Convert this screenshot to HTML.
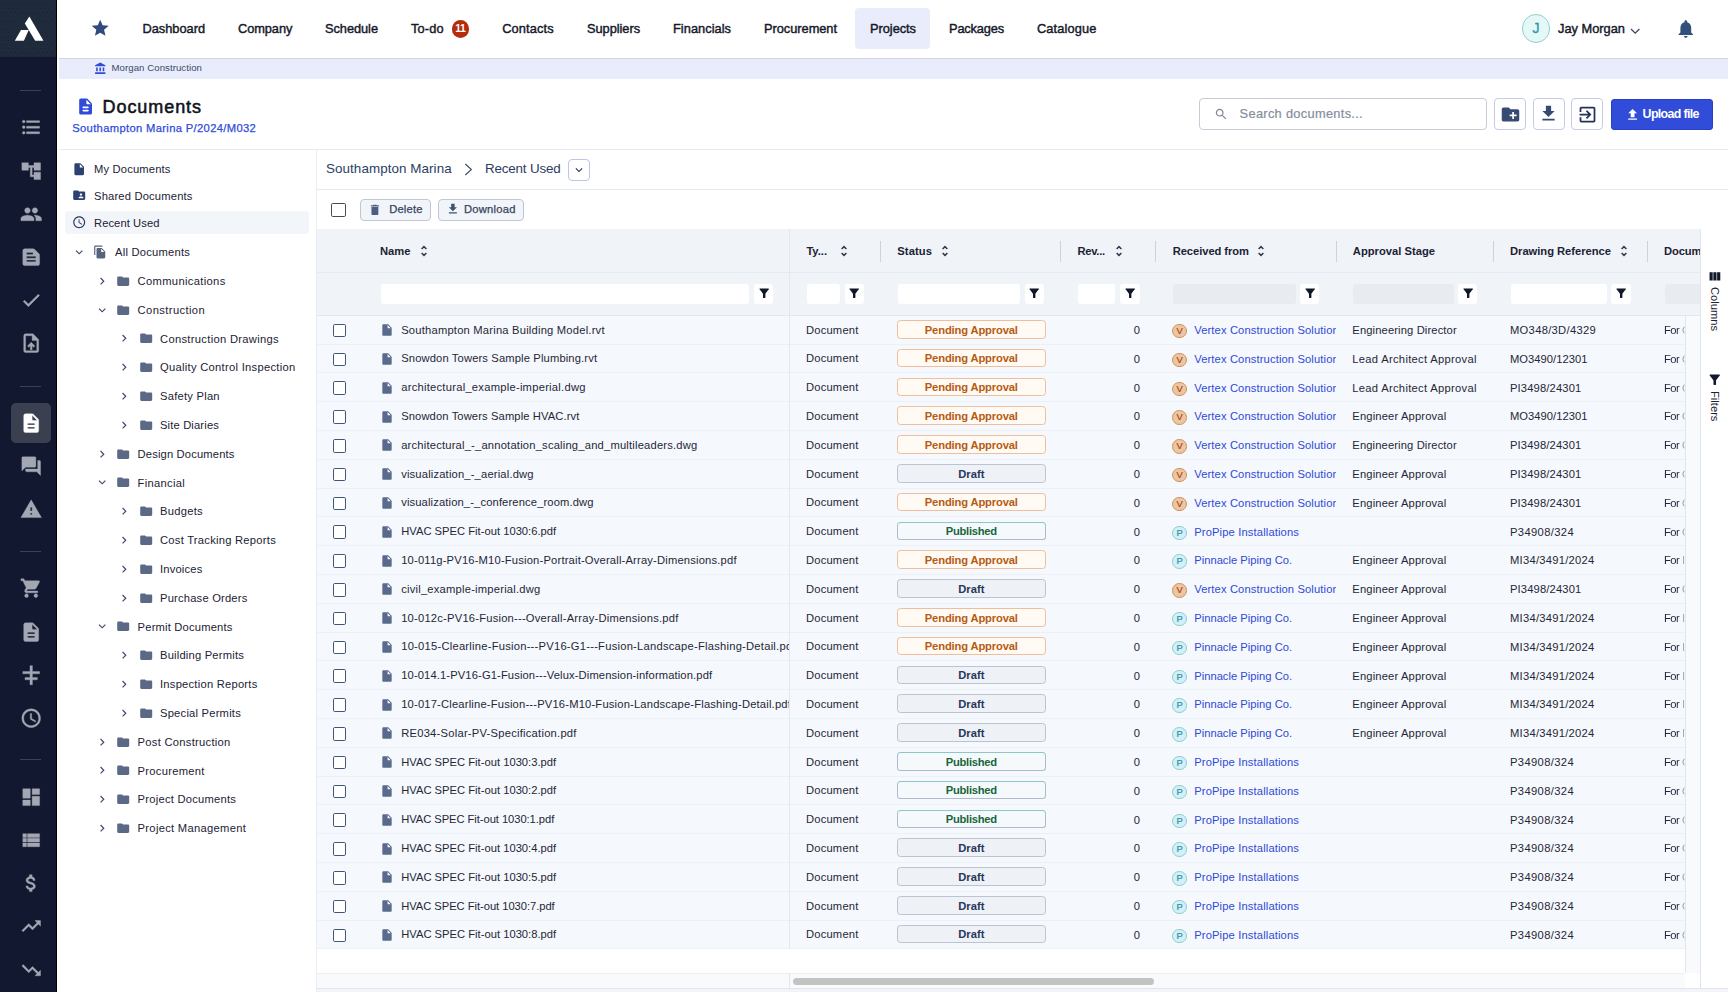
<!DOCTYPE html>
<html lang="en"><head><meta charset="utf-8"><title>Documents - Southampton Marina</title>
<style>
*,*::before,*::after{box-sizing:border-box}
html,body{margin:0;padding:0}
body{width:1728px;height:992px;overflow:hidden;background:#fff;position:relative;font-family:"Liberation Sans",sans-serif;color:#1b2234}
.sidebar,.topnav,.strip,.pagehead,.tree,.main,.grid,.sidepanel,.r{position:absolute;left:0;top:0;width:0;height:0;margin:0;padding:0}
.t{position:absolute;white-space:pre;margin:0;padding:0;text-decoration:none;display:block}
.ic{position:absolute;display:block;overflow:visible}
.med{-webkit-text-stroke:.42px}
.semi{-webkit-text-stroke:.55px}
div,span{position:absolute}
/* sidebar */
.sidebar::before{content:"";position:absolute;left:0;top:0;width:57px;height:992px;background:#121830;border-right:1.2px solid #000}
.logo{left:0;top:0;width:55.800px;height:57.400px;background-color:#1f2a3a}
.logo svg{position:absolute;left:0;top:0}
.sdiv{left:19.700px;width:21px;height:1px;background:#3a4158}
.sactive{left:10.900px;top:403.300px;width:40px;height:39.400px;border-radius:5px;background:#3a4050}
/* top nav */
.topnav::before{content:"";position:absolute;left:59px;top:0;width:1669px;height:58.500px;background:#fff;border-bottom:1px solid #d0d6e4}
.navsel{left:855px;top:8px;width:75px;height:41px;border-radius:4px;background:#e9edfb}
.badge{left:451.800px;top:20.200px;width:17.600px;height:17.600px;border-radius:50%;background:#b42c0d;color:#fff;font-size:10.400px;font-weight:700;text-align:center;line-height:17.800px;letter-spacing:-.5px;text-indent:-.5px}
.avatar{left:1521.900px;top:14.300px;width:28.400px;height:28.400px;border-radius:50%;border:1px solid #8fd0d4;background:#e4f8f8;color:#2e97a8;font-size:14px;-webkit-text-stroke:.3px;text-align:center;line-height:27px}
/* strip */
.strip::before{content:"";position:absolute;left:59px;top:58.500px;width:1669px;height:20px;background:#e9edfb}
/* page header */
.pagehead::after{content:"";position:absolute;left:59px;top:149.400px;width:1669px;height:1px;background:#e8ecf2}
.search{left:1199.200px;top:98.300px;width:287.600px;height:31.500px;border:1px solid #c6cbd5;border-radius:4px;background:#fff}
.ibtn{top:98.300px;width:31.800px;height:31.500px;border:1px solid #c3caea;border-radius:4px;background:#fff}
.upbtn{left:1610.700px;top:98.600px;width:102.700px;height:31.200px;border-radius:3px;background:#304cd9;border:1px solid #2841c6}
/* tree */
.tree::before{content:"";position:absolute;left:316px;top:150px;width:1px;height:842px;background:#eaedf3}
.tsel{left:64.800px;top:211.200px;width:244.200px;height:22.800px;border-radius:4px;background:#f2f5f9}
/* main */
.ddbtn{left:568px;top:159.300px;width:21.500px;height:21.300px;border:1px solid #bcc5ea;border-radius:4px;background:#fff}
.hline{left:317px;width:1411px;height:1px;background:#e6eaf1}
.cb{width:14.400px;height:14.400px;border:1.400px solid #42557c;border-radius:1.800px;background:#fff}
.cb{border-color:#4a4b50}
.cb.sm{width:13.600px;height:13.600px;border-color:#42557c}
.tbtn{top:199px;height:21.800px;border:1px solid #bfc7d4;background:#f1f4f8;border-radius:4px}
.ghead{left:317px;top:229px;width:1383px;height:44px;background:#f0f3f8;border-bottom:1px solid #e6e9f1}
.gfilt{left:317px;top:273px;width:1383px;height:43px;background:#f0f3f8;border-bottom:1px solid #e3e6f3}
.hsep{top:241px;height:20.600px;width:1px;background:#cdd2dc}
.fin{top:283.600px;height:20.200px;background:#fff;border-radius:3px}
.fin.dis{background:#e8ebf0}
.fbtn{top:283.800px;width:19.600px;height:19.800px;background:#fff;border-radius:3px;margin-left:-.5px}
.row{left:317px;width:1368px;height:28.800px;background:#f5f8fc;border-bottom:1px solid #edf0f6}
.clipr{overflow:hidden}
.fade{-webkit-mask-image:linear-gradient(90deg,#000 70%,transparent 100%);mask-image:linear-gradient(90deg,#000 70%,transparent 100%)}
.bdg{left:896.900px;width:148.800px;height:18.500px;border:1px solid;border-radius:3.500px}
.pend{background:#fffaf3;border-color:#eebf9c}
.draft{background:#eef1f6;border-color:#bcc4d2}
.publ{background:#f6f9fc;border-color:#adbccd;border-top-color:#8ac8c5}
.av{left:1172.300px;width:14.500px;height:14.500px;border-radius:50%;border:1px solid;font-size:9.400px;font-weight:400;-webkit-text-stroke:.2px;text-align:center;line-height:12.700px}
.av.v{background:#ebc6a3;border-color:#cf935f;color:#b3400c}
.av.p{background:#d3f0f6;border-color:#8fcdd2;color:#2b8fa9}
.pinline{left:789px;top:229px;width:1px;height:720px;background:#e3e7ef}
.pinline2{left:789px;top:973px;width:1px;height:15px;background:#e0e5ee}
.vscroll{left:1685px;top:315.500px;width:15px;height:657.500px;background:#f8fafb;border-left:1px solid #e2e6ee}
.hscroll{left:790px;top:973px;width:895px;height:15px;background:#f8fafb;border-top:1px solid #eceff4}
.hthumb{left:3.200px;top:3.800px;width:360.400px;height:7.600px;background:#c3c3c3;border-radius:4px}
.hscroll-l{left:317px;top:973px;width:472.500px;height:15px;background:#f8fafb;border-top:1px solid #eceff4}
.sidepanel::before{content:"";position:absolute;left:1700px;top:229px;width:28px;height:759px;background:#fff;border-left:1px solid #e0e4f2}
.main::after{content:"";position:absolute;left:317px;top:988px;width:1411px;height:4px;background:#f2f4f9;border-top:1px solid #e0e4ef}
.vt{writing-mode:vertical-rl;font-size:11.200px;width:14px;line-height:14px;color:#1b2234;white-space:pre}

</style></head>
<body>
<aside class="sidebar">
<div class="logo"><svg viewBox="0 0 57 57.500" width="57" height="57.500"><defs><pattern id="dots" width="4" height="8" patternUnits="userSpaceOnUse"><rect x="3" y="4" width="1" height="1" fill="#0f1b52"/><rect x="0" y="0" width="1" height="1" fill="#0f1b52"/></pattern><radialGradient id="dm" cx="29" cy="30" r="30" gradientUnits="userSpaceOnUse"><stop offset=".35" stop-color="#000"/><stop offset=".95" stop-color="#fff"/></radialGradient><mask id="dmask"><rect width="57" height="58" fill="url(#dm)"/></mask></defs><rect x="2" y="3" width="50" height="55" fill="url(#dots)" mask="url(#dmask)"/><path fill="#fff" d="M24.800 23.500 L29.350 16.600 L43.500 40.800 L35.200 40.800 Z"/><path fill="#fff" d="M21 29.900 L28.700 29.900 L23.900 40.800 L14.800 40.800 Z"/></svg></div>
<div class="sdiv" style="top:90.4px"></div>
<div class="sdiv" style="top:385.7px"></div>
<div class="sdiv" style="top:550.7px"></div>
<div class="sdiv" style="top:759.4px"></div>
<div class="sactive"></div>
<svg class="ic" style="left:19.70px;top:116.40px;width:22.4px;height:22.4px;" viewBox="0 0 24 24"><path fill="#a3a7b3" stroke="#a3a7b3" stroke-width="0.4" stroke-linejoin="round" d="M4 10.5c-.83 0-1.5.67-1.5 1.5s.67 1.5 1.5 1.5 1.5-.67 1.5-1.5-.67-1.5-1.5-1.5zm0-6c-.83 0-1.5.67-1.5 1.5S3.17 7.5 4 7.5 5.5 6.83 5.5 6 4.83 4.500 4 4.500zm0 12c-.83 0-1.5.68-1.5 1.5s.68 1.5 1.5 1.5 1.5-.68 1.5-1.5-.67-1.5-1.5-1.5zM7 19h14v-2H7v2zm0-6h14v-2H7v2zm0-8v2h14V5H7z"/></svg>
<svg class="ic" style="left:19.70px;top:159.60px;width:22.4px;height:22.4px;" viewBox="0 0 24 24"><path fill="#a3a7b3" stroke="#a3a7b3" stroke-width="0.4" stroke-linejoin="round" d="M22 11V3h-7v3H9V3H2v8h7V8h2v10h4v3h7v-8h-7v3h-2V8h2v3z"/></svg>
<svg class="ic" style="left:19.70px;top:202.80px;width:22.4px;height:22.4px;" viewBox="0 0 24 24"><path fill="#a3a7b3" stroke="#a3a7b3" stroke-width="0.4" stroke-linejoin="round" d="M16 11c1.66 0 2.99-1.34 2.99-3S17.66 5 16 5c-1.66 0-3 1.34-3 3s1.34 3 3 3zm-8 0c1.66 0 2.990-1.340 2.990-3S9.660 5 8 5C6.340 5 5 6.340 5 8s1.340 3 3 3zm0 2c-2.330 0-7 1.170-7 3.500V19h14v-2.500c0-2.330-4.670-3.500-7-3.500zm8 0c-.290 0-.620.020-.970.050 1.160.840 1.970 1.970 1.970 3.450V19h6v-2.500c0-2.330-4.670-3.500-7-3.500z"/></svg>
<svg class="ic" style="left:19.70px;top:246.00px;width:22.4px;height:22.4px;" viewBox="0 0 24 24"><path fill="#a3a7b3" stroke="#a3a7b3" stroke-width="0.4" stroke-linejoin="round" d="M20.410 8.410l-4.830-4.830c-.370-.370-.880-.580-1.410-.580H5c-1.100 0-2 .9-2 2v14c0 1.100.9 2 2 2h14c1.100 0 2-.9 2-2V9.830c0-.530-.210-1.040-.590-1.420zM7 7h7v2H7V7zm10 10H7v-2h10v2zm0-4H7v-2h10v2z"/></svg>
<svg class="ic" style="left:19.70px;top:289.20px;width:22.4px;height:22.4px;" viewBox="0 0 24 24"><path fill="#a3a7b3" stroke="#a3a7b3" stroke-width="0.4" stroke-linejoin="round" d="M9 16.170L4.830 12l-1.420 1.410L9 19 21 7l-1.410-1.410z"/></svg>
<svg class="ic" style="left:19.70px;top:332.40px;width:22.4px;height:22.4px;" viewBox="0 0 24 24"><path fill="#a3a7b3" stroke="#a3a7b3" stroke-width="0.4" stroke-linejoin="round" d="M14 2H6c-1.100 0-1.990.9-1.990 2L4 20c0 1.100.890 2 1.990 2H18c1.100 0 2-.9 2-2V8l-6-6zm4 18H6V4h7v5h5v11zM8 15.010l1.410 1.410L11 14.840V19h2v-4.160l1.590 1.590L16 15.010 12.010 11z"/></svg>
<svg class="ic" style="left:19.70px;top:411.90px;width:22.4px;height:22.4px;" viewBox="0 0 24 24"><path fill="#ffffff" stroke="#ffffff" stroke-width="0.4" stroke-linejoin="round" d="M14.590 2.590c-.380-.380-.890-.590-1.420-.590H6c-1.100 0-2 .9-2 2v16c0 1.100.890 2 1.990 2H18c1.100 0 2-.9 2-2V8.830c0-.530-.210-1.040-.590-1.410l-4.820-4.830zM15 18H9c-.550 0-1-.450-1-1s.450-1 1-1h6c.550 0 1 .450 1 1s-.450 1-1 1zm0-4H9c-.550 0-1-.450-1-1s.450-1 1-1h6c.550 0 1 .450 1 1s-.450 1-1 1zm-2-6V3.500L18.500 9H14c-.550 0-1-.450-1-1z"/></svg>
<svg class="ic" style="left:19.70px;top:455.20px;width:22.4px;height:22.4px;" viewBox="0 0 24 24"><path fill="#a3a7b3" stroke="#a3a7b3" stroke-width="0.4" stroke-linejoin="round" d="M21 6h-2v9H6v2c0 .55.45 1 1 1h11l4 4V7c0-.55-.45-1-1-1zm-4 6V3c0-.55-.45-1-1-1H3c-.55 0-1 .45-1 1v14l4-4h10c.55 0 1-.45 1-1z"/></svg>
<svg class="ic" style="left:19.70px;top:498.40px;width:22.4px;height:22.4px;" viewBox="0 0 24 24"><path fill="#a3a7b3" stroke="#a3a7b3" stroke-width="0.4" stroke-linejoin="round" d="M1 21h22L12 2 1 21zm12-3h-2v-2h2v2zm0-4h-2v-4h2v4z"/></svg>
<svg class="ic" style="left:19.70px;top:577.30px;width:22.4px;height:22.4px;" viewBox="0 0 24 24"><path fill="#a3a7b3" stroke="#a3a7b3" stroke-width="0.4" stroke-linejoin="round" d="M7 18c-1.100 0-1.990.9-1.990 2S5.900 22 7 22s2-.9 2-2-.9-2-2-2zM1 2v2h2l3.600 7.590-1.350 2.450c-.160.280-.250.610-.250.960 0 1.100.9 2 2 2h12v-2H7.420c-.140 0-.250-.110-.250-.250l.030-.120.9-1.630h7.450c.750 0 1.410-.410 1.750-1.030l3.580-6.490c.080-.140.120-.310.120-.480 0-.550-.450-1-1-1H5.210l-.940-2H1zm16 16c-1.100 0-1.990.9-1.990 2s.890 2 1.990 2 2-.9 2-2-.9-2-2-2z"/></svg>
<svg class="ic" style="left:19.70px;top:620.50px;width:22.4px;height:22.4px;" viewBox="0 0 24 24"><path fill="#a3a7b3" stroke="#a3a7b3" stroke-width="0.4" stroke-linejoin="round" d="M14.590 2.590c-.380-.380-.890-.590-1.420-.590H6c-1.100 0-2 .9-2 2v16c0 1.100.890 2 1.990 2H18c1.100 0 2-.9 2-2V8.830c0-.530-.210-1.040-.590-1.410l-4.820-4.830zM15 18H9c-.550 0-1-.450-1-1s.450-1 1-1h6c.550 0 1 .450 1 1s-.450 1-1 1zm0-4H9c-.550 0-1-.450-1-1s.450-1 1-1h6c.550 0 1 .450 1 1s-.450 1-1 1zm-2-6V3.500L18.500 9H14c-.550 0-1-.450-1-1z"/></svg>
<svg class="ic" style="left:19.70px;top:663.70px;width:22.4px;height:22.4px;" viewBox="0 0 24 24"><path fill="#a3a7b3" stroke="#a3a7b3" stroke-width="0.4" stroke-linejoin="round" d="M10.700 1.800h2.600V8H21v2.500h-7.700v3.900h5.300v2.500h-5.300v5.300h-2.600v-5.300H5.400v-2.500h5.300v-3.900H3V8h7.700z"/></svg>
<svg class="ic" style="left:19.70px;top:706.90px;width:22.4px;height:22.4px;" viewBox="0 0 24 24"><path fill="#a3a7b3" stroke="#a3a7b3" stroke-width="0.4" stroke-linejoin="round" d="M11.990 2C6.470 2 2 6.480 2 12s4.470 10 9.990 10C17.520 22 22 17.520 22 12S17.520 2 11.990 2zM12 20c-4.420 0-8-3.580-8-8s3.580-8 8-8 8 3.580 8 8-3.580 8-8 8zm.5-13H11v6l5.250 3.150.750-1.230-4.500-2.670z"/></svg>
<svg class="ic" style="left:19.70px;top:785.70px;width:22.4px;height:22.4px;" viewBox="0 0 24 24"><path fill="#a3a7b3" stroke="#a3a7b3" stroke-width="0.4" stroke-linejoin="round" d="M3 13h8V3H3v10zm0 8h8v-6H3v6zm10 0h8V11h-8v10zm0-18v6h8V3h-8z"/></svg>
<svg class="ic" style="left:19.70px;top:828.90px;width:22.4px;height:22.4px;" viewBox="0 0 24 24"><path fill="#a3a7b3" stroke="#a3a7b3" stroke-width="0.4" stroke-linejoin="round" d="M3 14h4v-4H3v4zm0 5h4v-4H3v4zM3 9h4V5H3v4zm5 5h13v-4H8v4zm0 5h13v-4H8v4zM8 5v4h13V5H8z"/></svg>
<svg class="ic" style="left:19.70px;top:872.10px;width:22.4px;height:22.4px;" viewBox="0 0 24 24"><path fill="#a3a7b3" stroke="#a3a7b3" stroke-width="0.4" stroke-linejoin="round" d="M11.800 10.900c-2.270-.590-3-1.200-3-2.150 0-1.090 1.010-1.850 2.700-1.850 1.780 0 2.440.850 2.500 2.100h2.210c-.070-1.720-1.120-3.300-3.210-3.810V3h-3v2.160c-1.940.420-3.500 1.680-3.500 3.610 0 2.310 1.910 3.460 4.700 4.130 2.500.6 3 1.480 3 2.410 0 .690-.490 1.790-2.700 1.790-2.060 0-2.870-.920-2.980-2.100h-2.200c.120 2.190 1.760 3.420 3.680 3.830V21h3v-2.150c1.950-.370 3.500-1.500 3.500-3.550 0-2.840-2.430-3.810-4.700-4.400z"/></svg>
<svg class="ic" style="left:19.70px;top:915.30px;width:22.4px;height:22.4px;" viewBox="0 0 24 24"><path fill="#a3a7b3" stroke="#a3a7b3" stroke-width="0.4" stroke-linejoin="round" d="M16 6l2.290 2.290-4.880 4.880-4-4L2 16.590 3.410 18l6-6 4 4 6.300-6.290L22 12V6z"/></svg>
<svg class="ic" style="left:19.70px;top:958.50px;width:22.4px;height:22.4px;" viewBox="0 0 24 24"><path fill="#a3a7b3" stroke="#a3a7b3" stroke-width="0.4" stroke-linejoin="round" d="M16 18l2.290-2.290-4.880-4.880-4 4L2 7.410 3.410 6l6 6 4-4 6.300 6.290L22 12v6z"/></svg>
</aside>
<header class="topnav">
<svg class="ic" style="left:89.60px;top:18.40px;width:20.4px;height:20.4px;" viewBox="0 0 24 24"><path fill="#2f4a7c" d="M12 17.270L18.180 21l-1.640-7.030L22 9.240l-7.190-.610L12 2 9.190 8.630 2 9.240l5.460 4.730L5.820 21z"/></svg>
<div class="navsel"></div>
<a class="t med" style="left:142.50px;top:20.25px;font-size:12.8px;line-height:17.9px;font-weight:400;color:#15182a;letter-spacing:-0.012px;">Dashboard</a>
<a class="t med" style="left:238.00px;top:20.25px;font-size:12.8px;line-height:17.9px;font-weight:400;color:#15182a;letter-spacing:-0.069px;">Company</a>
<a class="t med" style="left:325.00px;top:20.25px;font-size:12.8px;line-height:17.9px;font-weight:400;color:#15182a;letter-spacing:-0.047px;">Schedule</a>
<a class="t med" style="left:411.00px;top:20.25px;font-size:12.8px;line-height:17.9px;font-weight:400;color:#15182a;letter-spacing:0.157px;">To-do</a>
<a class="t med" style="left:502.20px;top:20.25px;font-size:12.8px;line-height:17.9px;font-weight:400;color:#15182a;letter-spacing:0.136px;">Contacts</a>
<a class="t med" style="left:587.00px;top:20.25px;font-size:12.8px;line-height:17.9px;font-weight:400;color:#15182a;letter-spacing:-0.040px;">Suppliers</a>
<a class="t med" style="left:673.00px;top:20.25px;font-size:12.8px;line-height:17.9px;font-weight:400;color:#15182a;letter-spacing:0.037px;">Financials</a>
<a class="t med" style="left:764.00px;top:20.25px;font-size:12.8px;line-height:17.9px;font-weight:400;color:#15182a;letter-spacing:-0.024px;">Procurement</a>
<a class="t med" style="left:870.00px;top:20.25px;font-size:12.8px;line-height:17.9px;font-weight:400;color:#15182a;letter-spacing:-0.029px;">Projects</a>
<a class="t med" style="left:949.00px;top:20.25px;font-size:12.8px;line-height:17.9px;font-weight:400;color:#15182a;letter-spacing:-0.150px;">Packages</a>
<a class="t med" style="left:1037.00px;top:20.25px;font-size:12.8px;line-height:17.9px;font-weight:400;color:#15182a;letter-spacing:0.128px;">Catalogue</a>
<span class="badge">11</span>
<span class="avatar">J</span>
<span class="t med" style="left:1558.00px;top:20.15px;font-size:12.8px;line-height:17.9px;font-weight:400;color:#15182a;letter-spacing:0.014px;">Jay Morgan</span>
<svg class="ic" style="left:1629.6px;top:28.4px;width:10.4px;height:7px" viewBox="0 0 10.400 7"><path d="M1 1 L5.200 5.200 L9.400 1" fill="none" stroke="#3a4560" stroke-width="1.300"/></svg>
<svg class="ic" style="left:1675.00px;top:18.20px;width:21.6px;height:21.6px;" viewBox="0 0 24 24"><path fill="#33507c" d="M12 22c1.100 0 2-.9 2-2h-4c0 1.100.890 2 2 2zm6-6v-5c0-3.070-1.640-5.640-4.500-6.320V4c0-.830-.670-1.500-1.500-1.500s-1.500.670-1.500 1.500v.680C7.630 5.360 6 7.920 6 11v5l-2 2v1h16v-1l-2-2z"/></svg>
</header>
<div class="strip">
<svg class="ic" style="left:94.40px;top:61.60px;width:13px;height:13px;" viewBox="0 0 24 24"><path fill="#2f4bd8" d="M4 10v7h3v-7H4zm6 0v7h3v-7h-3zM2 22h19v-3H2v3zm14-12v7h3v-7h-3zm-4.500-9L2 6v2h19V6l-9.500-5z"/></svg>
<span class="t" style="left:111.50px;top:61.30px;font-size:9.6px;line-height:13.4px;font-weight:400;color:#3a4a6b;letter-spacing:0.076px;">Morgan Construction</span>
</div>
<section class="pagehead">
<svg class="ic" style="left:75.70px;top:97.20px;width:19.2px;height:19.2px;" viewBox="0 0 24 24"><path fill="#2f4bd8" d="M14.590 2.590c-.380-.380-.890-.590-1.420-.590H6c-1.100 0-2 .9-2 2v16c0 1.100.890 2 1.990 2H18c1.100 0 2-.9 2-2V8.830c0-.530-.210-1.040-.590-1.410l-4.820-4.830zM15 18H9c-.550 0-1-.450-1-1s.450-1 1-1h6c.550 0 1 .450 1 1s-.450 1-1 1zm0-4H9c-.550 0-1-.450-1-1s.450-1 1-1h6c.550 0 1 .450 1 1s-.450 1-1 1zm-2-6V3.500L18.500 9H14c-.550 0-1-.450-1-1z"/></svg>
<h1 class="t semi" style="left:102.50px;top:95.40px;font-size:18px;line-height:25.2px;font-weight:400;color:#10131c;letter-spacing:0.939px;">Documents</h1>
<span class="t" style="left:72.20px;top:121.15px;font-size:11.2px;line-height:15.7px;font-weight:400;color:#2f4bd8;letter-spacing:0.349px;-webkit-text-stroke:.25px;">Southampton Marina P/2024/M032</span>
<div class="search"></div>
<svg class="ic" style="left:1214.00px;top:107.00px;width:14.4px;height:14.4px;" viewBox="0 0 24 24"><path fill="#7d8493" d="M15.500 14h-.790l-.280-.270C15.410 12.590 16 11.110 16 9.500 16 5.910 13.090 3 9.500 3S3 5.910 3 9.500 5.910 16 9.500 16c1.610 0 3.090-.590 4.230-1.570l.270.280v.790l5 4.990L20.490 19l-4.990-5zm-6 0C7.010 14 5 11.990 5 9.500S7.010 5 9.500 5 14 7.010 14 9.500 11.990 14 9.500 14z"/></svg>
<span class="t" style="left:1239.60px;top:104.65px;font-size:12.8px;line-height:17.9px;font-weight:400;color:#858d9d;letter-spacing:0.317px;-webkit-text-stroke:.2px;">Search documents...</span>
<div class="ibtn" style="left:1494.1px"></div>
<svg class="ic" style="left:1499.50px;top:103.60px;width:21px;height:21px;" viewBox="0 0 24 24"><path fill="#364a73" d="M20 6h-8l-2-2H4c-1.110 0-1.990.890-1.990 2L2 18c0 1.110.890 2 2 2h16c1.110 0 2-.890 2-2V8c0-1.110-.890-2-2-2zm-1 8h-3v3h-2v-3h-3v-2h3V9h2v3h3v2z"/></svg>
<div class="ibtn" style="left:1533px"></div>
<svg class="ic" style="left:1538.40px;top:103.10px;width:21px;height:21px;" viewBox="0 0 24 24"><path fill="#364a73" d="M19 9h-4V3H9v6H5l7 7 7-7zM5 18v2h14v-2H5z"/></svg>
<div class="ibtn" style="left:1571.1px"></div>
<svg class="ic" style="left:1576.50px;top:103.60px;width:21px;height:21px;" viewBox="0 0 24 24"><path fill="#22325a" d="M10.090 15.590L11.500 17l5-5-5-5-1.410 1.410L12.670 11H3v2h9.670l-2.580 2.590zM19 3H5c-1.110 0-2 .9-2 2v4h2V5h14v14H5v-4H3v4c0 1.100.890 2 2 2h14c1.100 0 2-.9 2-2V5c0-1.100-.9-2-2-2z"/></svg>
<div class="upbtn"></div>
<svg class="ic" style="left:1624.60px;top:106.60px;width:15.2px;height:15.2px;" viewBox="0 0 24 24"><path fill="#ffffff" d="M9 16h6v-6h4l-7-7-7 7h4zm-4 2h14v2H5z"/></svg>
<span class="t" style="left:1642.60px;top:105.80px;font-size:12.4px;line-height:17.4px;font-weight:700;color:#ffffff;letter-spacing:-0.649px;">Upload file</span>
</section>
<nav class="tree">
<div class="tsel"></div>
<svg class="ic" style="left:72.00px;top:161.50px;width:14.4px;height:14.4px;" viewBox="0 0 24 24"><path fill="#2b4170" d="M6 2c-1.100 0-1.990.9-1.990 2L4 20c0 1.100.890 2 1.990 2H18c1.100 0 2-.9 2-2V8l-6-6H6zm7 7V3.500L18.500 9H13z"/></svg>
<span class="t" style="left:94.00px;top:161.75px;font-size:11.2px;line-height:15.7px;font-weight:400;color:#1b2234;letter-spacing:0.166px;">My Documents</span>
<svg class="ic" style="left:72.00px;top:188.30px;width:14.4px;height:14.4px;" viewBox="0 0 24 24"><path fill="#2b4170" d="M20 6h-8l-2-2H4c-1.100 0-1.990.9-1.990 2L2 18c0 1.100.9 2 2 2h16c1.100 0 2-.9 2-2V8c0-1.100-.9-2-2-2zm-5 3c1.100 0 2 .9 2 2s-.9 2-2 2-2-.9-2-2 .9-2 2-2zm4 8h-8v-1c0-1.330 2.670-2 4-2s4 .670 4 2v1z"/></svg>
<span class="t" style="left:94.00px;top:188.65px;font-size:11.2px;line-height:15.7px;font-weight:400;color:#1b2234;letter-spacing:0.176px;">Shared Documents</span>
<svg class="ic" style="left:72.00px;top:215.40px;width:14.4px;height:14.4px;" viewBox="0 0 24 24"><path fill="#2b3a5e" d="M11.990 2C6.470 2 2 6.480 2 12s4.470 10 9.990 10C17.520 22 22 17.520 22 12S17.520 2 11.990 2zM12 20c-4.420 0-8-3.580-8-8s3.580-8 8-8 8 3.580 8 8-3.580 8-8 8zm.5-13H11v6l5.250 3.150.750-1.230-4.500-2.670z"/></svg>
<span class="t" style="left:94.00px;top:215.65px;font-size:11.2px;line-height:15.7px;font-weight:400;color:#1b2234;letter-spacing:0.074px;">Recent Used</span>
<svg class="ic" style="left:72.00px;top:245.10px;width:14.4px;height:14.4px;" viewBox="0 0 24 24"><path fill="#3d4a6b" d="M16.590 8.590L12 13.170 7.410 8.590 6 10l6 6 6-6z"/></svg>
<svg class="ic" style="left:93.30px;top:245.30px;width:14px;height:14px;" viewBox="0 0 24 24"><path fill="#56637f" d="M16 1H4c-1.100 0-2 .9-2 2v14h2V3h12V1zm-1 4l6 6v10c0 1.100-.9 2-2 2H7.990C6.890 23 6 22.100 6 21l.010-14c0-1.100.890-2 1.990-2h7zm-1 7h5.500L14 6.500V12z"/></svg>
<span class="t" style="left:115.10px;top:245.45px;font-size:11.2px;line-height:15.7px;font-weight:400;color:#1b2234;letter-spacing:0.221px;">All Documents</span>
<svg class="ic" style="left:94.50px;top:273.70px;width:14.4px;height:14.4px;" viewBox="0 0 24 24"><path fill="#3d4a6b" d="M10 6L8.590 7.410 13.170 12l-4.580 4.590L10 18l6-6z"/></svg>
<svg class="ic" style="left:116.20px;top:273.70px;width:14.4px;height:14.4px;" viewBox="0 0 24 24"><path fill="#5b6886" d="M10 4H4c-1.100 0-1.990.9-1.990 2L2 18c0 1.100.9 2 2 2h16c1.100 0 2-.9 2-2V8c0-1.100-.9-2-2-2h-8l-2-2z"/></svg>
<span class="t" style="left:137.60px;top:274.05px;font-size:11.2px;line-height:15.7px;font-weight:400;color:#1b2234;letter-spacing:0.334px;">Communications</span>
<svg class="ic" style="left:94.50px;top:302.50px;width:14.4px;height:14.4px;" viewBox="0 0 24 24"><path fill="#3d4a6b" d="M16.590 8.590L12 13.170 7.410 8.590 6 10l6 6 6-6z"/></svg>
<svg class="ic" style="left:116.20px;top:302.50px;width:14.4px;height:14.4px;" viewBox="0 0 24 24"><path fill="#5b6886" d="M10 4H4c-1.100 0-1.990.9-1.990 2L2 18c0 1.100.9 2 2 2h16c1.100 0 2-.9 2-2V8c0-1.100-.9-2-2-2h-8l-2-2z"/></svg>
<span class="t" style="left:137.60px;top:302.85px;font-size:11.2px;line-height:15.7px;font-weight:400;color:#1b2234;letter-spacing:0.391px;">Construction</span>
<svg class="ic" style="left:116.90px;top:331.30px;width:14.4px;height:14.4px;" viewBox="0 0 24 24"><path fill="#3d4a6b" d="M10 6L8.590 7.410 13.170 12l-4.580 4.590L10 18l6-6z"/></svg>
<svg class="ic" style="left:138.60px;top:331.30px;width:14.4px;height:14.4px;" viewBox="0 0 24 24"><path fill="#5b6886" d="M10 4H4c-1.100 0-1.990.9-1.990 2L2 18c0 1.100.9 2 2 2h16c1.100 0 2-.9 2-2V8c0-1.100-.9-2-2-2h-8l-2-2z"/></svg>
<span class="t" style="left:160.00px;top:331.65px;font-size:11.2px;line-height:15.7px;font-weight:400;color:#1b2234;letter-spacing:0.307px;">Construction Drawings</span>
<svg class="ic" style="left:116.90px;top:360.10px;width:14.4px;height:14.4px;" viewBox="0 0 24 24"><path fill="#3d4a6b" d="M10 6L8.590 7.410 13.170 12l-4.580 4.590L10 18l6-6z"/></svg>
<svg class="ic" style="left:138.60px;top:360.10px;width:14.4px;height:14.4px;" viewBox="0 0 24 24"><path fill="#5b6886" d="M10 4H4c-1.100 0-1.990.9-1.990 2L2 18c0 1.100.9 2 2 2h16c1.100 0 2-.9 2-2V8c0-1.100-.9-2-2-2h-8l-2-2z"/></svg>
<span class="t" style="left:160.00px;top:360.45px;font-size:11.2px;line-height:15.7px;font-weight:400;color:#1b2234;letter-spacing:0.284px;">Quality Control Inspection</span>
<svg class="ic" style="left:116.90px;top:388.90px;width:14.4px;height:14.4px;" viewBox="0 0 24 24"><path fill="#3d4a6b" d="M10 6L8.590 7.410 13.170 12l-4.580 4.590L10 18l6-6z"/></svg>
<svg class="ic" style="left:138.60px;top:388.90px;width:14.4px;height:14.4px;" viewBox="0 0 24 24"><path fill="#5b6886" d="M10 4H4c-1.100 0-1.990.9-1.990 2L2 18c0 1.100.9 2 2 2h16c1.100 0 2-.9 2-2V8c0-1.100-.9-2-2-2h-8l-2-2z"/></svg>
<span class="t" style="left:160.00px;top:389.25px;font-size:11.2px;line-height:15.7px;font-weight:400;color:#1b2234;letter-spacing:0.235px;">Safety Plan</span>
<svg class="ic" style="left:116.90px;top:417.70px;width:14.4px;height:14.4px;" viewBox="0 0 24 24"><path fill="#3d4a6b" d="M10 6L8.590 7.410 13.170 12l-4.580 4.590L10 18l6-6z"/></svg>
<svg class="ic" style="left:138.60px;top:417.70px;width:14.4px;height:14.4px;" viewBox="0 0 24 24"><path fill="#5b6886" d="M10 4H4c-1.100 0-1.990.9-1.990 2L2 18c0 1.100.9 2 2 2h16c1.100 0 2-.9 2-2V8c0-1.100-.9-2-2-2h-8l-2-2z"/></svg>
<span class="t" style="left:160.00px;top:418.05px;font-size:11.2px;line-height:15.7px;font-weight:400;color:#1b2234;letter-spacing:0.150px;">Site Diaries</span>
<svg class="ic" style="left:94.50px;top:446.50px;width:14.4px;height:14.4px;" viewBox="0 0 24 24"><path fill="#3d4a6b" d="M10 6L8.590 7.410 13.170 12l-4.580 4.590L10 18l6-6z"/></svg>
<svg class="ic" style="left:116.20px;top:446.50px;width:14.4px;height:14.4px;" viewBox="0 0 24 24"><path fill="#5b6886" d="M10 4H4c-1.100 0-1.990.9-1.990 2L2 18c0 1.100.9 2 2 2h16c1.100 0 2-.9 2-2V8c0-1.100-.9-2-2-2h-8l-2-2z"/></svg>
<span class="t" style="left:137.60px;top:446.85px;font-size:11.2px;line-height:15.7px;font-weight:400;color:#1b2234;letter-spacing:0.155px;">Design Documents</span>
<svg class="ic" style="left:94.50px;top:475.30px;width:14.4px;height:14.4px;" viewBox="0 0 24 24"><path fill="#3d4a6b" d="M16.590 8.590L12 13.170 7.410 8.590 6 10l6 6 6-6z"/></svg>
<svg class="ic" style="left:116.20px;top:475.30px;width:14.4px;height:14.4px;" viewBox="0 0 24 24"><path fill="#5b6886" d="M10 4H4c-1.100 0-1.990.9-1.990 2L2 18c0 1.100.9 2 2 2h16c1.100 0 2-.9 2-2V8c0-1.100-.9-2-2-2h-8l-2-2z"/></svg>
<span class="t" style="left:137.60px;top:475.65px;font-size:11.2px;line-height:15.7px;font-weight:400;color:#1b2234;letter-spacing:0.302px;">Financial</span>
<svg class="ic" style="left:116.90px;top:504.10px;width:14.4px;height:14.4px;" viewBox="0 0 24 24"><path fill="#3d4a6b" d="M10 6L8.590 7.410 13.170 12l-4.580 4.590L10 18l6-6z"/></svg>
<svg class="ic" style="left:138.60px;top:504.10px;width:14.4px;height:14.4px;" viewBox="0 0 24 24"><path fill="#5b6886" d="M10 4H4c-1.100 0-1.990.9-1.990 2L2 18c0 1.100.9 2 2 2h16c1.100 0 2-.9 2-2V8c0-1.100-.9-2-2-2h-8l-2-2z"/></svg>
<span class="t" style="left:160.00px;top:504.45px;font-size:11.2px;line-height:15.7px;font-weight:400;color:#1b2234;letter-spacing:0.277px;">Budgets</span>
<svg class="ic" style="left:116.90px;top:532.90px;width:14.4px;height:14.4px;" viewBox="0 0 24 24"><path fill="#3d4a6b" d="M10 6L8.590 7.410 13.170 12l-4.580 4.590L10 18l6-6z"/></svg>
<svg class="ic" style="left:138.60px;top:532.90px;width:14.4px;height:14.4px;" viewBox="0 0 24 24"><path fill="#5b6886" d="M10 4H4c-1.100 0-1.990.9-1.990 2L2 18c0 1.100.9 2 2 2h16c1.100 0 2-.9 2-2V8c0-1.100-.9-2-2-2h-8l-2-2z"/></svg>
<span class="t" style="left:160.00px;top:533.25px;font-size:11.2px;line-height:15.7px;font-weight:400;color:#1b2234;letter-spacing:0.253px;">Cost Tracking Reports</span>
<svg class="ic" style="left:116.90px;top:561.70px;width:14.4px;height:14.4px;" viewBox="0 0 24 24"><path fill="#3d4a6b" d="M10 6L8.590 7.410 13.170 12l-4.580 4.590L10 18l6-6z"/></svg>
<svg class="ic" style="left:138.60px;top:561.70px;width:14.4px;height:14.4px;" viewBox="0 0 24 24"><path fill="#5b6886" d="M10 4H4c-1.100 0-1.990.9-1.990 2L2 18c0 1.100.9 2 2 2h16c1.100 0 2-.9 2-2V8c0-1.100-.9-2-2-2h-8l-2-2z"/></svg>
<span class="t" style="left:160.00px;top:562.05px;font-size:11.2px;line-height:15.7px;font-weight:400;color:#1b2234;letter-spacing:0.182px;">Invoices</span>
<svg class="ic" style="left:116.90px;top:590.50px;width:14.4px;height:14.4px;" viewBox="0 0 24 24"><path fill="#3d4a6b" d="M10 6L8.590 7.410 13.170 12l-4.580 4.590L10 18l6-6z"/></svg>
<svg class="ic" style="left:138.60px;top:590.50px;width:14.4px;height:14.4px;" viewBox="0 0 24 24"><path fill="#5b6886" d="M10 4H4c-1.100 0-1.990.9-1.990 2L2 18c0 1.100.9 2 2 2h16c1.100 0 2-.9 2-2V8c0-1.100-.9-2-2-2h-8l-2-2z"/></svg>
<span class="t" style="left:160.00px;top:590.85px;font-size:11.2px;line-height:15.7px;font-weight:400;color:#1b2234;letter-spacing:0.196px;">Purchase Orders</span>
<svg class="ic" style="left:94.50px;top:619.30px;width:14.4px;height:14.4px;" viewBox="0 0 24 24"><path fill="#3d4a6b" d="M16.590 8.590L12 13.170 7.410 8.590 6 10l6 6 6-6z"/></svg>
<svg class="ic" style="left:116.20px;top:619.30px;width:14.4px;height:14.4px;" viewBox="0 0 24 24"><path fill="#5b6886" d="M10 4H4c-1.100 0-1.990.9-1.990 2L2 18c0 1.100.9 2 2 2h16c1.100 0 2-.9 2-2V8c0-1.100-.9-2-2-2h-8l-2-2z"/></svg>
<span class="t" style="left:137.60px;top:619.65px;font-size:11.2px;line-height:15.7px;font-weight:400;color:#1b2234;letter-spacing:0.187px;">Permit Documents</span>
<svg class="ic" style="left:116.90px;top:648.10px;width:14.4px;height:14.4px;" viewBox="0 0 24 24"><path fill="#3d4a6b" d="M10 6L8.590 7.410 13.170 12l-4.580 4.590L10 18l6-6z"/></svg>
<svg class="ic" style="left:138.60px;top:648.10px;width:14.4px;height:14.4px;" viewBox="0 0 24 24"><path fill="#5b6886" d="M10 4H4c-1.100 0-1.990.9-1.990 2L2 18c0 1.100.9 2 2 2h16c1.100 0 2-.9 2-2V8c0-1.100-.9-2-2-2h-8l-2-2z"/></svg>
<span class="t" style="left:160.00px;top:648.45px;font-size:11.2px;line-height:15.7px;font-weight:400;color:#1b2234;letter-spacing:0.197px;">Building Permits</span>
<svg class="ic" style="left:116.90px;top:676.90px;width:14.4px;height:14.4px;" viewBox="0 0 24 24"><path fill="#3d4a6b" d="M10 6L8.590 7.410 13.170 12l-4.580 4.590L10 18l6-6z"/></svg>
<svg class="ic" style="left:138.60px;top:676.90px;width:14.4px;height:14.4px;" viewBox="0 0 24 24"><path fill="#5b6886" d="M10 4H4c-1.100 0-1.990.9-1.990 2L2 18c0 1.100.9 2 2 2h16c1.100 0 2-.9 2-2V8c0-1.100-.9-2-2-2h-8l-2-2z"/></svg>
<span class="t" style="left:160.00px;top:677.25px;font-size:11.2px;line-height:15.7px;font-weight:400;color:#1b2234;letter-spacing:0.234px;">Inspection Reports</span>
<svg class="ic" style="left:116.90px;top:705.70px;width:14.4px;height:14.4px;" viewBox="0 0 24 24"><path fill="#3d4a6b" d="M10 6L8.590 7.410 13.170 12l-4.580 4.590L10 18l6-6z"/></svg>
<svg class="ic" style="left:138.60px;top:705.70px;width:14.4px;height:14.4px;" viewBox="0 0 24 24"><path fill="#5b6886" d="M10 4H4c-1.100 0-1.990.9-1.990 2L2 18c0 1.100.9 2 2 2h16c1.100 0 2-.9 2-2V8c0-1.100-.9-2-2-2h-8l-2-2z"/></svg>
<span class="t" style="left:160.00px;top:706.05px;font-size:11.2px;line-height:15.7px;font-weight:400;color:#1b2234;letter-spacing:0.219px;">Special Permits</span>
<svg class="ic" style="left:94.50px;top:734.50px;width:14.4px;height:14.4px;" viewBox="0 0 24 24"><path fill="#3d4a6b" d="M10 6L8.590 7.410 13.170 12l-4.580 4.590L10 18l6-6z"/></svg>
<svg class="ic" style="left:116.20px;top:734.50px;width:14.4px;height:14.4px;" viewBox="0 0 24 24"><path fill="#5b6886" d="M10 4H4c-1.100 0-1.990.9-1.990 2L2 18c0 1.100.9 2 2 2h16c1.100 0 2-.9 2-2V8c0-1.100-.9-2-2-2h-8l-2-2z"/></svg>
<span class="t" style="left:137.60px;top:734.85px;font-size:11.2px;line-height:15.7px;font-weight:400;color:#1b2234;letter-spacing:0.276px;">Post Construction</span>
<svg class="ic" style="left:94.50px;top:763.30px;width:14.4px;height:14.4px;" viewBox="0 0 24 24"><path fill="#3d4a6b" d="M10 6L8.590 7.410 13.170 12l-4.580 4.590L10 18l6-6z"/></svg>
<svg class="ic" style="left:116.20px;top:763.30px;width:14.4px;height:14.4px;" viewBox="0 0 24 24"><path fill="#5b6886" d="M10 4H4c-1.100 0-1.990.9-1.990 2L2 18c0 1.100.9 2 2 2h16c1.100 0 2-.9 2-2V8c0-1.100-.9-2-2-2h-8l-2-2z"/></svg>
<span class="t" style="left:137.60px;top:763.65px;font-size:11.2px;line-height:15.7px;font-weight:400;color:#1b2234;letter-spacing:0.268px;">Procurement</span>
<svg class="ic" style="left:94.50px;top:792.10px;width:14.4px;height:14.4px;" viewBox="0 0 24 24"><path fill="#3d4a6b" d="M10 6L8.590 7.410 13.170 12l-4.580 4.590L10 18l6-6z"/></svg>
<svg class="ic" style="left:116.20px;top:792.10px;width:14.4px;height:14.4px;" viewBox="0 0 24 24"><path fill="#5b6886" d="M10 4H4c-1.100 0-1.990.9-1.990 2L2 18c0 1.100.9 2 2 2h16c1.100 0 2-.9 2-2V8c0-1.100-.9-2-2-2h-8l-2-2z"/></svg>
<span class="t" style="left:137.60px;top:792.45px;font-size:11.2px;line-height:15.7px;font-weight:400;color:#1b2234;letter-spacing:0.234px;">Project Documents</span>
<svg class="ic" style="left:94.50px;top:820.90px;width:14.4px;height:14.4px;" viewBox="0 0 24 24"><path fill="#3d4a6b" d="M10 6L8.590 7.410 13.170 12l-4.580 4.590L10 18l6-6z"/></svg>
<svg class="ic" style="left:116.20px;top:820.90px;width:14.4px;height:14.4px;" viewBox="0 0 24 24"><path fill="#5b6886" d="M10 4H4c-1.100 0-1.990.9-1.990 2L2 18c0 1.100.9 2 2 2h16c1.100 0 2-.9 2-2V8c0-1.100-.9-2-2-2h-8l-2-2z"/></svg>
<span class="t" style="left:137.60px;top:821.25px;font-size:11.2px;line-height:15.7px;font-weight:400;color:#1b2234;letter-spacing:0.293px;">Project Management</span>
</nav>
<main class="main">
<span class="t" style="left:326.00px;top:160.30px;font-size:13.4px;line-height:18.8px;font-weight:400;color:#2c3d63;letter-spacing:0.077px;">Southampton Marina</span>
<svg class="ic" style="left:464px;top:162.800px;width:9px;height:13px" viewBox="0 0 9 13"><path d="M1.300 1 L7.400 6.500 L1.300 12" fill="none" stroke="#3a4a6b" stroke-width="1.100"/></svg>
<span class="t" style="left:485.00px;top:160.30px;font-size:13.4px;line-height:18.8px;font-weight:400;color:#2c3d63;letter-spacing:-0.175px;">Recent Used</span>
<div class="ddbtn"></div>
<svg class="ic" style="left:571.70px;top:163.10px;width:14px;height:14px;" viewBox="0 0 24 24"><path fill="#26395c" d="M16.590 8.590L12 13.170 7.410 8.590 6 10l6 6 6-6z"/></svg>
<div class="hline" style="top:188.600px"></div>
<div class="cb" style="left:331.200px;top:202.700px"></div>
<div class="tbtn" style="left:360px;width:70.800px"></div>
<svg class="ic" style="left:367.90px;top:202.90px;width:13.8px;height:13.8px;" viewBox="0 0 24 24"><path fill="#4c5d86" d="M6 19c0 1.100.9 2 2 2h8c1.100 0 2-.9 2-2V7H6v12zM19 4h-3.500l-1-1h-5l-1 1H5v2h14V4z"/></svg>
<span class="t" style="left:389.20px;top:202.05px;font-size:11.2px;line-height:15.7px;font-weight:400;color:#36445f;letter-spacing:0.193px;-webkit-text-stroke:.25px;">Delete</span>
<div class="tbtn" style="left:438px;width:85.800px"></div>
<svg class="ic" style="left:445.90px;top:202.10px;width:13.8px;height:13.8px;" viewBox="0 0 24 24"><path fill="#3f5079" d="M19 9h-4V3H9v6H5l7 7 7-7zM5 18v2h14v-2H5z"/></svg>
<span class="t" style="left:464.00px;top:202.05px;font-size:11.2px;line-height:15.7px;font-weight:400;color:#36445f;letter-spacing:0.242px;-webkit-text-stroke:.25px;">Download</span>
<div class="grid">
<div class="ghead"></div><div class="gfilt"></div>
<span class="t" style="left:380.00px;top:243.95px;font-size:11.2px;line-height:15.7px;font-weight:700;color:#1b2234;letter-spacing:0.004px;">Name</span>
<svg class="ic" style="left:416.50px;top:243.90px;width:14px;height:14px;" viewBox="0 0 24 24"><path fill="#1b2234" stroke="#1b2234" stroke-width="0.5" stroke-linejoin="round" d="M12 5.830L15.170 9l1.410-1.410L12 3 7.410 7.590 8.830 9 12 5.830zm0 12.340L8.830 15l-1.410 1.410L12 21l4.590-4.590L15.170 15 12 18.170z"/></svg>
<span class="t" style="left:806.40px;top:243.95px;font-size:11.2px;line-height:15.7px;font-weight:700;color:#1b2234;letter-spacing:-0.024px;">Ty...</span>
<svg class="ic" style="left:836.50px;top:243.90px;width:14px;height:14px;" viewBox="0 0 24 24"><path fill="#1b2234" stroke="#1b2234" stroke-width="0.5" stroke-linejoin="round" d="M12 5.830L15.170 9l1.410-1.410L12 3 7.410 7.590 8.830 9 12 5.830zm0 12.340L8.830 15l-1.410 1.410L12 21l4.590-4.590L15.170 15 12 18.170z"/></svg>
<span class="t" style="left:897.30px;top:243.95px;font-size:11.2px;line-height:15.7px;font-weight:700;color:#1b2234;letter-spacing:0.083px;">Status</span>
<svg class="ic" style="left:938.00px;top:243.90px;width:14px;height:14px;" viewBox="0 0 24 24"><path fill="#1b2234" stroke="#1b2234" stroke-width="0.5" stroke-linejoin="round" d="M12 5.830L15.170 9l1.410-1.410L12 3 7.410 7.590 8.830 9 12 5.830zm0 12.340L8.830 15l-1.410 1.410L12 21l4.590-4.590L15.170 15 12 18.170z"/></svg>
<span class="t" style="left:1077.40px;top:243.95px;font-size:11.2px;line-height:15.7px;font-weight:700;color:#1b2234;letter-spacing:-0.239px;">Rev...</span>
<svg class="ic" style="left:1111.50px;top:243.90px;width:14px;height:14px;" viewBox="0 0 24 24"><path fill="#1b2234" stroke="#1b2234" stroke-width="0.5" stroke-linejoin="round" d="M12 5.830L15.170 9l1.410-1.410L12 3 7.410 7.590 8.830 9 12 5.830zm0 12.340L8.830 15l-1.410 1.410L12 21l4.590-4.590L15.170 15 12 18.170z"/></svg>
<span class="t" style="left:1172.70px;top:243.95px;font-size:11.2px;line-height:15.7px;font-weight:700;color:#1b2234;letter-spacing:-0.062px;">Received from</span>
<svg class="ic" style="left:1254.00px;top:243.90px;width:14px;height:14px;" viewBox="0 0 24 24"><path fill="#1b2234" stroke="#1b2234" stroke-width="0.5" stroke-linejoin="round" d="M12 5.830L15.170 9l1.410-1.410L12 3 7.410 7.590 8.830 9 12 5.830zm0 12.340L8.830 15l-1.410 1.410L12 21l4.590-4.590L15.170 15 12 18.170z"/></svg>
<span class="t" style="left:1352.80px;top:243.95px;font-size:11.2px;line-height:15.7px;font-weight:700;color:#1b2234;letter-spacing:0.010px;">Approval Stage</span>
<span class="t" style="left:1510.00px;top:243.95px;font-size:11.2px;line-height:15.7px;font-weight:700;color:#1b2234;letter-spacing:-0.026px;">Drawing Reference</span>
<svg class="ic" style="left:1617.20px;top:243.90px;width:14px;height:14px;" viewBox="0 0 24 24"><path fill="#1b2234" stroke="#1b2234" stroke-width="0.5" stroke-linejoin="round" d="M12 5.830L15.170 9l1.410-1.410L12 3 7.410 7.590 8.830 9 12 5.830zm0 12.340L8.830 15l-1.410 1.410L12 21l4.590-4.590L15.170 15 12 18.170z"/></svg>
<div class="clipr" style="left:1664px;top:240px;width:36px;height:22px">
<span class="t" style="left:0.00px;top:3.95px;font-size:11.2px;line-height:15.7px;font-weight:700;color:#1b2234;letter-spacing:-0.099px;">Document Purpose</span>
</div>
<div class="hsep" style="left:879.9px"></div>
<div class="hsep" style="left:1059.7px"></div>
<div class="hsep" style="left:1155.3px"></div>
<div class="hsep" style="left:1335.5px"></div>
<div class="hsep" style="left:1493.0px"></div>
<div class="hsep" style="left:1647.0px"></div>
<div class="fin" style="left:380.5px;width:368.5px"></div>
<div class="fbtn" style="left:754.3px"></div>
<svg class="ic" style="left:756.70px;top:286.20px;width:14.4px;height:14.4px;" viewBox="0 0 24 24"><path fill="#111827" d="M4.250 5.610C6.270 8.200 10 13 10 13v6c0 .550.450 1 1 1h2c.550 0 1-.450 1-1v-6s3.720-4.800 5.740-7.390c.510-.660.040-1.610-.790-1.610H5.040c-.830 0-1.300.950-.790 1.610z"/></svg>
<div class="fin" style="left:807px;width:33.0px"></div>
<div class="fbtn" style="left:845px"></div>
<svg class="ic" style="left:847.40px;top:286.20px;width:14.4px;height:14.4px;" viewBox="0 0 24 24"><path fill="#111827" d="M4.250 5.610C6.270 8.200 10 13 10 13v6c0 .550.450 1 1 1h2c.550 0 1-.450 1-1v-6s3.720-4.800 5.740-7.390c.510-.660.040-1.610-.790-1.610H5.040c-.830 0-1.300.950-.790 1.610z"/></svg>
<div class="fin" style="left:897.5px;width:122.5px"></div>
<div class="fbtn" style="left:1025px"></div>
<svg class="ic" style="left:1027.40px;top:286.20px;width:14.4px;height:14.4px;" viewBox="0 0 24 24"><path fill="#111827" d="M4.250 5.610C6.270 8.200 10 13 10 13v6c0 .550.450 1 1 1h2c.550 0 1-.450 1-1v-6s3.720-4.800 5.740-7.390c.510-.660.040-1.610-.790-1.610H5.040c-.830 0-1.300.950-.790 1.610z"/></svg>
<div class="fin" style="left:1077.5px;width:37.5px"></div>
<div class="fbtn" style="left:1120.5px"></div>
<svg class="ic" style="left:1122.90px;top:286.20px;width:14.4px;height:14.4px;" viewBox="0 0 24 24"><path fill="#111827" d="M4.250 5.610C6.270 8.200 10 13 10 13v6c0 .550.450 1 1 1h2c.550 0 1-.450 1-1v-6s3.720-4.800 5.740-7.390c.510-.660.040-1.610-.790-1.610H5.040c-.830 0-1.300.950-.790 1.610z"/></svg>
<div class="fin dis" style="left:1172.5px;width:123.5px"></div>
<div class="fbtn" style="left:1300.3px"></div>
<svg class="ic" style="left:1302.70px;top:286.20px;width:14.4px;height:14.4px;" viewBox="0 0 24 24"><path fill="#111827" d="M4.250 5.610C6.270 8.200 10 13 10 13v6c0 .550.450 1 1 1h2c.550 0 1-.450 1-1v-6s3.720-4.800 5.740-7.390c.510-.660.040-1.610-.790-1.610H5.040c-.830 0-1.300.950-.790 1.610z"/></svg>
<div class="fin dis" style="left:1352.5px;width:101.1px"></div>
<div class="fbtn" style="left:1458.3px"></div>
<svg class="ic" style="left:1460.70px;top:286.20px;width:14.4px;height:14.4px;" viewBox="0 0 24 24"><path fill="#111827" d="M4.250 5.610C6.270 8.200 10 13 10 13v6c0 .550.450 1 1 1h2c.550 0 1-.450 1-1v-6s3.720-4.800 5.740-7.390c.510-.660.040-1.610-.790-1.610H5.040c-.830 0-1.300.950-.790 1.610z"/></svg>
<div class="fin" style="left:1510.5px;width:96.5px"></div>
<div class="fbtn" style="left:1611.8px"></div>
<svg class="ic" style="left:1614.20px;top:286.20px;width:14.4px;height:14.4px;" viewBox="0 0 24 24"><path fill="#111827" d="M4.250 5.610C6.270 8.200 10 13 10 13v6c0 .550.450 1 1 1h2c.550 0 1-.450 1-1v-6s3.720-4.800 5.740-7.390c.510-.660.040-1.610-.790-1.610H5.040c-.830 0-1.300.950-.790 1.610z"/></svg>
<div class="fin dis" style="left:1664.500px;width:36px;border-radius:3px 0 0 3px"></div>
<div class="r">
<div class="row" style="top:315.8px">
<div class="cb sm" style="left:15.800px;top:8.100px"></div>
</div>
<svg class="ic" style="left:379.80px;top:323.10px;width:14px;height:14px;" viewBox="0 0 24 24"><path fill="#5a6a8c" d="M6 2c-1.100 0-1.990.9-1.990 2L4 20c0 1.100.890 2 1.990 2H18c1.100 0 2-.9 2-2V8l-6-6H6zm7 7V3.500L18.500 9H13z"/></svg>
<span class="t" style="left:401.20px;top:322.55px;font-size:11.2px;line-height:15.7px;font-weight:400;color:#1f2738;letter-spacing:0.206px;width:388.0px;overflow:hidden;">Southampton Marina Building Model.rvt</span>
<span class="t" style="left:806.00px;top:322.55px;font-size:11.2px;line-height:15.7px;font-weight:400;color:#1f2738;letter-spacing:0.188px;">Document</span>
<div class="bdg pend" style="top:320.0px"></div>
<span class="t" style="left:924.80px;top:322.55px;font-size:11.2px;line-height:15.7px;font-weight:700;color:#b65a12;letter-spacing:-0.145px;">Pending Approval</span>
<span class="t" style="left:1133.80px;top:323.05px;font-size:11.2px;line-height:15.7px;font-weight:400;color:#1f2738;">0</span>
<span class="av v" style="top:323.9px">V</span>
<a class="t" style="left:1194.20px;top:323.05px;font-size:11.2px;line-height:15.7px;font-weight:400;color:#2f4ad6;letter-spacing:0.125px;width:141.8px;overflow:hidden;">Vertex Construction Solutions</a>
<span class="t" style="left:1352.30px;top:323.05px;font-size:11.2px;line-height:15.7px;font-weight:400;color:#1f2738;letter-spacing:0.126px;">Engineering Director</span>
<span class="t" style="left:1510.00px;top:323.05px;font-size:11.2px;line-height:15.7px;font-weight:400;color:#1f2738;letter-spacing:0.300px;">MO348/3D/4329</span>
<span class="t fade" style="left:1664.00px;top:323.05px;font-size:11.2px;line-height:15.7px;font-weight:400;color:#1f2738;letter-spacing:-0.481px;width:21.5px;overflow:hidden;">For Construction</span>
</div>
<div class="r">
<div class="row" style="top:344.6px">
<div class="cb sm" style="left:15.800px;top:8.100px"></div>
</div>
<svg class="ic" style="left:379.80px;top:351.90px;width:14px;height:14px;" viewBox="0 0 24 24"><path fill="#5a6a8c" d="M6 2c-1.100 0-1.990.9-1.990 2L4 20c0 1.100.890 2 1.990 2H18c1.100 0 2-.9 2-2V8l-6-6H6zm7 7V3.500L18.500 9H13z"/></svg>
<span class="t" style="left:401.20px;top:351.35px;font-size:11.2px;line-height:15.7px;font-weight:400;color:#1f2738;letter-spacing:0.137px;width:388.0px;overflow:hidden;">Snowdon Towers Sample Plumbing.rvt</span>
<span class="t" style="left:806.00px;top:351.35px;font-size:11.2px;line-height:15.7px;font-weight:400;color:#1f2738;letter-spacing:0.188px;">Document</span>
<div class="bdg pend" style="top:348.8px"></div>
<span class="t" style="left:924.80px;top:351.35px;font-size:11.2px;line-height:15.7px;font-weight:700;color:#b65a12;letter-spacing:-0.145px;">Pending Approval</span>
<span class="t" style="left:1133.80px;top:351.85px;font-size:11.2px;line-height:15.7px;font-weight:400;color:#1f2738;">0</span>
<span class="av v" style="top:352.8px">V</span>
<a class="t" style="left:1194.20px;top:351.85px;font-size:11.2px;line-height:15.7px;font-weight:400;color:#2f4ad6;letter-spacing:0.125px;width:141.8px;overflow:hidden;">Vertex Construction Solutions</a>
<span class="t" style="left:1352.30px;top:351.85px;font-size:11.2px;line-height:15.7px;font-weight:400;color:#1f2738;letter-spacing:0.302px;">Lead Architect Approval</span>
<span class="t" style="left:1510.00px;top:351.85px;font-size:11.2px;line-height:15.7px;font-weight:400;color:#1f2738;letter-spacing:0.030px;">MO3490/12301</span>
<span class="t fade" style="left:1664.00px;top:351.85px;font-size:11.2px;line-height:15.7px;font-weight:400;color:#1f2738;letter-spacing:-0.481px;width:21.5px;overflow:hidden;">For Construction</span>
</div>
<div class="r">
<div class="row" style="top:373.4px">
<div class="cb sm" style="left:15.800px;top:8.100px"></div>
</div>
<svg class="ic" style="left:379.80px;top:380.70px;width:14px;height:14px;" viewBox="0 0 24 24"><path fill="#5a6a8c" d="M6 2c-1.100 0-1.990.9-1.990 2L4 20c0 1.100.890 2 1.990 2H18c1.100 0 2-.9 2-2V8l-6-6H6zm7 7V3.500L18.500 9H13z"/></svg>
<span class="t" style="left:401.20px;top:380.15px;font-size:11.2px;line-height:15.7px;font-weight:400;color:#1f2738;letter-spacing:0.251px;width:388.0px;overflow:hidden;">architectural_example-imperial.dwg</span>
<span class="t" style="left:806.00px;top:380.15px;font-size:11.2px;line-height:15.7px;font-weight:400;color:#1f2738;letter-spacing:0.188px;">Document</span>
<div class="bdg pend" style="top:377.6px"></div>
<span class="t" style="left:924.80px;top:380.15px;font-size:11.2px;line-height:15.7px;font-weight:700;color:#b65a12;letter-spacing:-0.145px;">Pending Approval</span>
<span class="t" style="left:1133.80px;top:380.65px;font-size:11.2px;line-height:15.7px;font-weight:400;color:#1f2738;">0</span>
<span class="av v" style="top:381.6px">V</span>
<a class="t" style="left:1194.20px;top:380.65px;font-size:11.2px;line-height:15.7px;font-weight:400;color:#2f4ad6;letter-spacing:0.125px;width:141.8px;overflow:hidden;">Vertex Construction Solutions</a>
<span class="t" style="left:1352.30px;top:380.65px;font-size:11.2px;line-height:15.7px;font-weight:400;color:#1f2738;letter-spacing:0.302px;">Lead Architect Approval</span>
<span class="t" style="left:1510.00px;top:380.65px;font-size:11.2px;line-height:15.7px;font-weight:400;color:#1f2738;letter-spacing:0.151px;">PI3498/24301</span>
<span class="t fade" style="left:1664.00px;top:380.65px;font-size:11.2px;line-height:15.7px;font-weight:400;color:#1f2738;letter-spacing:-0.481px;width:21.5px;overflow:hidden;">For Construction</span>
</div>
<div class="r">
<div class="row" style="top:402.2px">
<div class="cb sm" style="left:15.800px;top:8.100px"></div>
</div>
<svg class="ic" style="left:379.80px;top:409.50px;width:14px;height:14px;" viewBox="0 0 24 24"><path fill="#5a6a8c" d="M6 2c-1.100 0-1.990.9-1.990 2L4 20c0 1.100.890 2 1.990 2H18c1.100 0 2-.9 2-2V8l-6-6H6zm7 7V3.500L18.500 9H13z"/></svg>
<span class="t" style="left:401.20px;top:408.95px;font-size:11.2px;line-height:15.7px;font-weight:400;color:#1f2738;letter-spacing:0.112px;width:388.0px;overflow:hidden;">Snowdon Towers Sample HVAC.rvt</span>
<span class="t" style="left:806.00px;top:408.95px;font-size:11.2px;line-height:15.7px;font-weight:400;color:#1f2738;letter-spacing:0.188px;">Document</span>
<div class="bdg pend" style="top:406.4px"></div>
<span class="t" style="left:924.80px;top:408.95px;font-size:11.2px;line-height:15.7px;font-weight:700;color:#b65a12;letter-spacing:-0.145px;">Pending Approval</span>
<span class="t" style="left:1133.80px;top:409.45px;font-size:11.2px;line-height:15.7px;font-weight:400;color:#1f2738;">0</span>
<span class="av v" style="top:410.4px">V</span>
<a class="t" style="left:1194.20px;top:409.45px;font-size:11.2px;line-height:15.7px;font-weight:400;color:#2f4ad6;letter-spacing:0.125px;width:141.8px;overflow:hidden;">Vertex Construction Solutions</a>
<span class="t" style="left:1352.30px;top:409.45px;font-size:11.2px;line-height:15.7px;font-weight:400;color:#1f2738;letter-spacing:0.151px;">Engineer Approval</span>
<span class="t" style="left:1510.00px;top:409.45px;font-size:11.2px;line-height:15.7px;font-weight:400;color:#1f2738;letter-spacing:0.030px;">MO3490/12301</span>
<span class="t fade" style="left:1664.00px;top:409.45px;font-size:11.2px;line-height:15.7px;font-weight:400;color:#1f2738;letter-spacing:-0.481px;width:21.5px;overflow:hidden;">For Construction</span>
</div>
<div class="r">
<div class="row" style="top:431.0px">
<div class="cb sm" style="left:15.800px;top:8.100px"></div>
</div>
<svg class="ic" style="left:379.80px;top:438.30px;width:14px;height:14px;" viewBox="0 0 24 24"><path fill="#5a6a8c" d="M6 2c-1.100 0-1.990.9-1.990 2L4 20c0 1.100.890 2 1.990 2H18c1.100 0 2-.9 2-2V8l-6-6H6zm7 7V3.500L18.500 9H13z"/></svg>
<span class="t" style="left:401.20px;top:437.75px;font-size:11.2px;line-height:15.7px;font-weight:400;color:#1f2738;letter-spacing:0.197px;width:388.0px;overflow:hidden;">architectural_-_annotation_scaling_and_multileaders.dwg</span>
<span class="t" style="left:806.00px;top:437.75px;font-size:11.2px;line-height:15.7px;font-weight:400;color:#1f2738;letter-spacing:0.188px;">Document</span>
<div class="bdg pend" style="top:435.2px"></div>
<span class="t" style="left:924.80px;top:437.75px;font-size:11.2px;line-height:15.7px;font-weight:700;color:#b65a12;letter-spacing:-0.145px;">Pending Approval</span>
<span class="t" style="left:1133.80px;top:438.25px;font-size:11.2px;line-height:15.7px;font-weight:400;color:#1f2738;">0</span>
<span class="av v" style="top:439.1px">V</span>
<a class="t" style="left:1194.20px;top:438.25px;font-size:11.2px;line-height:15.7px;font-weight:400;color:#2f4ad6;letter-spacing:0.125px;width:141.8px;overflow:hidden;">Vertex Construction Solutions</a>
<span class="t" style="left:1352.30px;top:438.25px;font-size:11.2px;line-height:15.7px;font-weight:400;color:#1f2738;letter-spacing:0.126px;">Engineering Director</span>
<span class="t" style="left:1510.00px;top:438.25px;font-size:11.2px;line-height:15.7px;font-weight:400;color:#1f2738;letter-spacing:0.151px;">PI3498/24301</span>
<span class="t fade" style="left:1664.00px;top:438.25px;font-size:11.2px;line-height:15.7px;font-weight:400;color:#1f2738;letter-spacing:-0.481px;width:21.5px;overflow:hidden;">For Construction</span>
</div>
<div class="r">
<div class="row" style="top:459.8px">
<div class="cb sm" style="left:15.800px;top:8.100px"></div>
</div>
<svg class="ic" style="left:379.80px;top:467.10px;width:14px;height:14px;" viewBox="0 0 24 24"><path fill="#5a6a8c" d="M6 2c-1.100 0-1.990.9-1.990 2L4 20c0 1.100.890 2 1.990 2H18c1.100 0 2-.9 2-2V8l-6-6H6zm7 7V3.500L18.500 9H13z"/></svg>
<span class="t" style="left:401.20px;top:466.55px;font-size:11.2px;line-height:15.7px;font-weight:400;color:#1f2738;letter-spacing:0.169px;width:388.0px;overflow:hidden;">visualization_-_aerial.dwg</span>
<span class="t" style="left:806.00px;top:466.55px;font-size:11.2px;line-height:15.7px;font-weight:400;color:#1f2738;letter-spacing:0.188px;">Document</span>
<div class="bdg draft" style="top:464.0px"></div>
<span class="t" style="left:958.15px;top:466.55px;font-size:11.2px;line-height:15.7px;font-weight:700;color:#28375a;letter-spacing:0.038px;">Draft</span>
<span class="t" style="left:1133.80px;top:467.05px;font-size:11.2px;line-height:15.7px;font-weight:400;color:#1f2738;">0</span>
<span class="av v" style="top:467.9px">V</span>
<a class="t" style="left:1194.20px;top:467.05px;font-size:11.2px;line-height:15.7px;font-weight:400;color:#2f4ad6;letter-spacing:0.125px;width:141.8px;overflow:hidden;">Vertex Construction Solutions</a>
<span class="t" style="left:1352.30px;top:467.05px;font-size:11.2px;line-height:15.7px;font-weight:400;color:#1f2738;letter-spacing:0.151px;">Engineer Approval</span>
<span class="t" style="left:1510.00px;top:467.05px;font-size:11.2px;line-height:15.7px;font-weight:400;color:#1f2738;letter-spacing:0.151px;">PI3498/24301</span>
<span class="t fade" style="left:1664.00px;top:467.05px;font-size:11.2px;line-height:15.7px;font-weight:400;color:#1f2738;letter-spacing:-0.481px;width:21.5px;overflow:hidden;">For Construction</span>
</div>
<div class="r">
<div class="row" style="top:488.6px">
<div class="cb sm" style="left:15.800px;top:8.100px"></div>
</div>
<svg class="ic" style="left:379.80px;top:495.90px;width:14px;height:14px;" viewBox="0 0 24 24"><path fill="#5a6a8c" d="M6 2c-1.100 0-1.990.9-1.990 2L4 20c0 1.100.890 2 1.990 2H18c1.100 0 2-.9 2-2V8l-6-6H6zm7 7V3.500L18.500 9H13z"/></svg>
<span class="t" style="left:401.20px;top:495.35px;font-size:11.2px;line-height:15.7px;font-weight:400;color:#1f2738;letter-spacing:0.134px;width:388.0px;overflow:hidden;">visualization_-_conference_room.dwg</span>
<span class="t" style="left:806.00px;top:495.35px;font-size:11.2px;line-height:15.7px;font-weight:400;color:#1f2738;letter-spacing:0.188px;">Document</span>
<div class="bdg pend" style="top:492.8px"></div>
<span class="t" style="left:924.80px;top:495.35px;font-size:11.2px;line-height:15.7px;font-weight:700;color:#b65a12;letter-spacing:-0.145px;">Pending Approval</span>
<span class="t" style="left:1133.80px;top:495.85px;font-size:11.2px;line-height:15.7px;font-weight:400;color:#1f2738;">0</span>
<span class="av v" style="top:496.8px">V</span>
<a class="t" style="left:1194.20px;top:495.85px;font-size:11.2px;line-height:15.7px;font-weight:400;color:#2f4ad6;letter-spacing:0.125px;width:141.8px;overflow:hidden;">Vertex Construction Solutions</a>
<span class="t" style="left:1352.30px;top:495.85px;font-size:11.2px;line-height:15.7px;font-weight:400;color:#1f2738;letter-spacing:0.151px;">Engineer Approval</span>
<span class="t" style="left:1510.00px;top:495.85px;font-size:11.2px;line-height:15.7px;font-weight:400;color:#1f2738;letter-spacing:0.151px;">PI3498/24301</span>
<span class="t fade" style="left:1664.00px;top:495.85px;font-size:11.2px;line-height:15.7px;font-weight:400;color:#1f2738;letter-spacing:-0.481px;width:21.5px;overflow:hidden;">For Construction</span>
</div>
<div class="r">
<div class="row" style="top:517.4px">
<div class="cb sm" style="left:15.800px;top:8.100px"></div>
</div>
<svg class="ic" style="left:379.80px;top:524.70px;width:14px;height:14px;" viewBox="0 0 24 24"><path fill="#5a6a8c" d="M6 2c-1.100 0-1.990.9-1.990 2L4 20c0 1.100.890 2 1.990 2H18c1.100 0 2-.9 2-2V8l-6-6H6zm7 7V3.500L18.500 9H13z"/></svg>
<span class="t" style="left:401.20px;top:524.15px;font-size:11.2px;line-height:15.7px;font-weight:400;color:#1f2738;letter-spacing:0.013px;width:388.0px;overflow:hidden;">HVAC SPEC Fit-out 1030:6.pdf</span>
<span class="t" style="left:806.00px;top:524.15px;font-size:11.2px;line-height:15.7px;font-weight:400;color:#1f2738;letter-spacing:0.188px;">Document</span>
<div class="bdg publ" style="top:521.6px"></div>
<span class="t" style="left:945.80px;top:524.15px;font-size:11.2px;line-height:15.7px;font-weight:700;color:#17653a;letter-spacing:-0.274px;">Published</span>
<span class="t" style="left:1133.80px;top:524.65px;font-size:11.2px;line-height:15.7px;font-weight:400;color:#1f2738;">0</span>
<span class="av p" style="top:525.5px">P</span>
<a class="t" style="left:1194.20px;top:524.65px;font-size:11.2px;line-height:15.7px;font-weight:400;color:#2f4ad6;letter-spacing:0.138px;width:141.8px;overflow:hidden;">ProPipe Installations</a>
<span class="t" style="left:1510.00px;top:524.65px;font-size:11.2px;line-height:15.7px;font-weight:400;color:#1f2738;letter-spacing:0.364px;">P34908/324</span>
<span class="t fade" style="left:1664.00px;top:524.65px;font-size:11.2px;line-height:15.7px;font-weight:400;color:#1f2738;letter-spacing:-0.481px;width:21.5px;overflow:hidden;">For Construction</span>
</div>
<div class="r">
<div class="row" style="top:546.2px">
<div class="cb sm" style="left:15.800px;top:8.100px"></div>
</div>
<svg class="ic" style="left:379.80px;top:553.50px;width:14px;height:14px;" viewBox="0 0 24 24"><path fill="#5a6a8c" d="M6 2c-1.100 0-1.990.9-1.990 2L4 20c0 1.100.890 2 1.990 2H18c1.100 0 2-.9 2-2V8l-6-6H6zm7 7V3.500L18.500 9H13z"/></svg>
<span class="t" style="left:401.20px;top:552.95px;font-size:11.2px;line-height:15.7px;font-weight:400;color:#1f2738;letter-spacing:0.183px;width:388.0px;overflow:hidden;">10-011g-PV16-M10-Fusion-Portrait-Overall-Array-Dimensions.pdf</span>
<span class="t" style="left:806.00px;top:552.95px;font-size:11.2px;line-height:15.7px;font-weight:400;color:#1f2738;letter-spacing:0.188px;">Document</span>
<div class="bdg pend" style="top:550.4px"></div>
<span class="t" style="left:924.80px;top:552.95px;font-size:11.2px;line-height:15.7px;font-weight:700;color:#b65a12;letter-spacing:-0.145px;">Pending Approval</span>
<span class="t" style="left:1133.80px;top:553.45px;font-size:11.2px;line-height:15.7px;font-weight:400;color:#1f2738;">0</span>
<span class="av p" style="top:554.4px">P</span>
<a class="t" style="left:1194.20px;top:553.45px;font-size:11.2px;line-height:15.7px;font-weight:400;color:#2f4ad6;letter-spacing:0.014px;width:141.8px;overflow:hidden;">Pinnacle Piping Co.</a>
<span class="t" style="left:1352.30px;top:553.45px;font-size:11.2px;line-height:15.7px;font-weight:400;color:#1f2738;letter-spacing:0.151px;">Engineer Approval</span>
<span class="t" style="left:1510.00px;top:553.45px;font-size:11.2px;line-height:15.7px;font-weight:400;color:#1f2738;letter-spacing:0.259px;">MI34/3491/2024</span>
<span class="t fade" style="left:1664.00px;top:553.45px;font-size:11.2px;line-height:15.7px;font-weight:400;color:#1f2738;letter-spacing:-0.471px;width:21.5px;overflow:hidden;">For Information</span>
</div>
<div class="r">
<div class="row" style="top:575.0px">
<div class="cb sm" style="left:15.800px;top:8.100px"></div>
</div>
<svg class="ic" style="left:379.80px;top:582.30px;width:14px;height:14px;" viewBox="0 0 24 24"><path fill="#5a6a8c" d="M6 2c-1.100 0-1.990.9-1.990 2L4 20c0 1.100.890 2 1.990 2H18c1.100 0 2-.9 2-2V8l-6-6H6zm7 7V3.500L18.500 9H13z"/></svg>
<span class="t" style="left:401.20px;top:581.75px;font-size:11.2px;line-height:15.7px;font-weight:400;color:#1f2738;letter-spacing:0.216px;width:388.0px;overflow:hidden;">civil_example-imperial.dwg</span>
<span class="t" style="left:806.00px;top:581.75px;font-size:11.2px;line-height:15.7px;font-weight:400;color:#1f2738;letter-spacing:0.188px;">Document</span>
<div class="bdg draft" style="top:579.2px"></div>
<span class="t" style="left:958.15px;top:581.75px;font-size:11.2px;line-height:15.7px;font-weight:700;color:#28375a;letter-spacing:0.038px;">Draft</span>
<span class="t" style="left:1133.80px;top:582.25px;font-size:11.2px;line-height:15.7px;font-weight:400;color:#1f2738;">0</span>
<span class="av v" style="top:583.1px">V</span>
<a class="t" style="left:1194.20px;top:582.25px;font-size:11.2px;line-height:15.7px;font-weight:400;color:#2f4ad6;letter-spacing:0.125px;width:141.8px;overflow:hidden;">Vertex Construction Solutions</a>
<span class="t" style="left:1352.30px;top:582.25px;font-size:11.2px;line-height:15.7px;font-weight:400;color:#1f2738;letter-spacing:0.151px;">Engineer Approval</span>
<span class="t" style="left:1510.00px;top:582.25px;font-size:11.2px;line-height:15.7px;font-weight:400;color:#1f2738;letter-spacing:0.151px;">PI3498/24301</span>
<span class="t fade" style="left:1664.00px;top:582.25px;font-size:11.2px;line-height:15.7px;font-weight:400;color:#1f2738;letter-spacing:-0.481px;width:21.5px;overflow:hidden;">For Construction</span>
</div>
<div class="r">
<div class="row" style="top:603.8px">
<div class="cb sm" style="left:15.800px;top:8.100px"></div>
</div>
<svg class="ic" style="left:379.80px;top:611.10px;width:14px;height:14px;" viewBox="0 0 24 24"><path fill="#5a6a8c" d="M6 2c-1.100 0-1.990.9-1.990 2L4 20c0 1.100.890 2 1.990 2H18c1.100 0 2-.9 2-2V8l-6-6H6zm7 7V3.500L18.500 9H13z"/></svg>
<span class="t" style="left:401.20px;top:610.55px;font-size:11.2px;line-height:15.7px;font-weight:400;color:#1f2738;letter-spacing:0.211px;width:388.0px;overflow:hidden;">10-012c-PV16-Fusion---Overall-Array-Dimensions.pdf</span>
<span class="t" style="left:806.00px;top:610.55px;font-size:11.2px;line-height:15.7px;font-weight:400;color:#1f2738;letter-spacing:0.188px;">Document</span>
<div class="bdg pend" style="top:608.0px"></div>
<span class="t" style="left:924.80px;top:610.55px;font-size:11.2px;line-height:15.7px;font-weight:700;color:#b65a12;letter-spacing:-0.145px;">Pending Approval</span>
<span class="t" style="left:1133.80px;top:611.05px;font-size:11.2px;line-height:15.7px;font-weight:400;color:#1f2738;">0</span>
<span class="av p" style="top:611.9px">P</span>
<a class="t" style="left:1194.20px;top:611.05px;font-size:11.2px;line-height:15.7px;font-weight:400;color:#2f4ad6;letter-spacing:0.014px;width:141.8px;overflow:hidden;">Pinnacle Piping Co.</a>
<span class="t" style="left:1352.30px;top:611.05px;font-size:11.2px;line-height:15.7px;font-weight:400;color:#1f2738;letter-spacing:0.151px;">Engineer Approval</span>
<span class="t" style="left:1510.00px;top:611.05px;font-size:11.2px;line-height:15.7px;font-weight:400;color:#1f2738;letter-spacing:0.259px;">MI34/3491/2024</span>
<span class="t fade" style="left:1664.00px;top:611.05px;font-size:11.2px;line-height:15.7px;font-weight:400;color:#1f2738;letter-spacing:-0.471px;width:21.5px;overflow:hidden;">For Information</span>
</div>
<div class="r">
<div class="row" style="top:632.6px">
<div class="cb sm" style="left:15.800px;top:8.100px"></div>
</div>
<svg class="ic" style="left:379.80px;top:639.90px;width:14px;height:14px;" viewBox="0 0 24 24"><path fill="#5a6a8c" d="M6 2c-1.100 0-1.990.9-1.990 2L4 20c0 1.100.890 2 1.990 2H18c1.100 0 2-.9 2-2V8l-6-6H6zm7 7V3.500L18.500 9H13z"/></svg>
<span class="t" style="left:401.20px;top:639.35px;font-size:11.2px;line-height:15.7px;font-weight:400;color:#1f2738;letter-spacing:0.237px;width:388.0px;overflow:hidden;">10-015-Clearline-Fusion---PV16-G1---Fusion-Landscape-Flashing-Detail.pdf</span>
<span class="t" style="left:806.00px;top:639.35px;font-size:11.2px;line-height:15.7px;font-weight:400;color:#1f2738;letter-spacing:0.188px;">Document</span>
<div class="bdg pend" style="top:636.8px"></div>
<span class="t" style="left:924.80px;top:639.35px;font-size:11.2px;line-height:15.7px;font-weight:700;color:#b65a12;letter-spacing:-0.145px;">Pending Approval</span>
<span class="t" style="left:1133.80px;top:639.85px;font-size:11.2px;line-height:15.7px;font-weight:400;color:#1f2738;">0</span>
<span class="av p" style="top:640.8px">P</span>
<a class="t" style="left:1194.20px;top:639.85px;font-size:11.2px;line-height:15.7px;font-weight:400;color:#2f4ad6;letter-spacing:0.014px;width:141.8px;overflow:hidden;">Pinnacle Piping Co.</a>
<span class="t" style="left:1352.30px;top:639.85px;font-size:11.2px;line-height:15.7px;font-weight:400;color:#1f2738;letter-spacing:0.151px;">Engineer Approval</span>
<span class="t" style="left:1510.00px;top:639.85px;font-size:11.2px;line-height:15.7px;font-weight:400;color:#1f2738;letter-spacing:0.259px;">MI34/3491/2024</span>
<span class="t fade" style="left:1664.00px;top:639.85px;font-size:11.2px;line-height:15.7px;font-weight:400;color:#1f2738;letter-spacing:-0.471px;width:21.5px;overflow:hidden;">For Information</span>
</div>
<div class="r">
<div class="row" style="top:661.4px">
<div class="cb sm" style="left:15.800px;top:8.100px"></div>
</div>
<svg class="ic" style="left:379.80px;top:668.70px;width:14px;height:14px;" viewBox="0 0 24 24"><path fill="#5a6a8c" d="M6 2c-1.100 0-1.990.9-1.990 2L4 20c0 1.100.890 2 1.990 2H18c1.100 0 2-.9 2-2V8l-6-6H6zm7 7V3.500L18.500 9H13z"/></svg>
<span class="t" style="left:401.20px;top:668.15px;font-size:11.2px;line-height:15.7px;font-weight:400;color:#1f2738;letter-spacing:0.122px;width:388.0px;overflow:hidden;">10-014.1-PV16-G1-Fusion---Velux-Dimension-information.pdf</span>
<span class="t" style="left:806.00px;top:668.15px;font-size:11.2px;line-height:15.7px;font-weight:400;color:#1f2738;letter-spacing:0.188px;">Document</span>
<div class="bdg draft" style="top:665.6px"></div>
<span class="t" style="left:958.15px;top:668.15px;font-size:11.2px;line-height:15.7px;font-weight:700;color:#28375a;letter-spacing:0.038px;">Draft</span>
<span class="t" style="left:1133.80px;top:668.65px;font-size:11.2px;line-height:15.7px;font-weight:400;color:#1f2738;">0</span>
<span class="av p" style="top:669.6px">P</span>
<a class="t" style="left:1194.20px;top:668.65px;font-size:11.2px;line-height:15.7px;font-weight:400;color:#2f4ad6;letter-spacing:0.014px;width:141.8px;overflow:hidden;">Pinnacle Piping Co.</a>
<span class="t" style="left:1352.30px;top:668.65px;font-size:11.2px;line-height:15.7px;font-weight:400;color:#1f2738;letter-spacing:0.151px;">Engineer Approval</span>
<span class="t" style="left:1510.00px;top:668.65px;font-size:11.2px;line-height:15.7px;font-weight:400;color:#1f2738;letter-spacing:0.259px;">MI34/3491/2024</span>
<span class="t fade" style="left:1664.00px;top:668.65px;font-size:11.2px;line-height:15.7px;font-weight:400;color:#1f2738;letter-spacing:-0.471px;width:21.5px;overflow:hidden;">For Information</span>
</div>
<div class="r">
<div class="row" style="top:690.2px">
<div class="cb sm" style="left:15.800px;top:8.100px"></div>
</div>
<svg class="ic" style="left:379.80px;top:697.50px;width:14px;height:14px;" viewBox="0 0 24 24"><path fill="#5a6a8c" d="M6 2c-1.100 0-1.990.9-1.990 2L4 20c0 1.100.890 2 1.990 2H18c1.100 0 2-.9 2-2V8l-6-6H6zm7 7V3.500L18.500 9H13z"/></svg>
<span class="t" style="left:401.20px;top:696.95px;font-size:11.2px;line-height:15.7px;font-weight:400;color:#1f2738;letter-spacing:0.183px;width:388.0px;overflow:hidden;">10-017-Clearline-Fusion---PV16-M10-Fusion-Landscape-Flashing-Detail.pdf</span>
<span class="t" style="left:806.00px;top:696.95px;font-size:11.2px;line-height:15.7px;font-weight:400;color:#1f2738;letter-spacing:0.188px;">Document</span>
<div class="bdg draft" style="top:694.4px"></div>
<span class="t" style="left:958.15px;top:696.95px;font-size:11.2px;line-height:15.7px;font-weight:700;color:#28375a;letter-spacing:0.038px;">Draft</span>
<span class="t" style="left:1133.80px;top:697.45px;font-size:11.2px;line-height:15.7px;font-weight:400;color:#1f2738;">0</span>
<span class="av p" style="top:698.4px">P</span>
<a class="t" style="left:1194.20px;top:697.45px;font-size:11.2px;line-height:15.7px;font-weight:400;color:#2f4ad6;letter-spacing:0.014px;width:141.8px;overflow:hidden;">Pinnacle Piping Co.</a>
<span class="t" style="left:1352.30px;top:697.45px;font-size:11.2px;line-height:15.7px;font-weight:400;color:#1f2738;letter-spacing:0.151px;">Engineer Approval</span>
<span class="t" style="left:1510.00px;top:697.45px;font-size:11.2px;line-height:15.7px;font-weight:400;color:#1f2738;letter-spacing:0.259px;">MI34/3491/2024</span>
<span class="t fade" style="left:1664.00px;top:697.45px;font-size:11.2px;line-height:15.7px;font-weight:400;color:#1f2738;letter-spacing:-0.471px;width:21.5px;overflow:hidden;">For Information</span>
</div>
<div class="r">
<div class="row" style="top:719.0px">
<div class="cb sm" style="left:15.800px;top:8.100px"></div>
</div>
<svg class="ic" style="left:379.80px;top:726.30px;width:14px;height:14px;" viewBox="0 0 24 24"><path fill="#5a6a8c" d="M6 2c-1.100 0-1.990.9-1.990 2L4 20c0 1.100.890 2 1.990 2H18c1.100 0 2-.9 2-2V8l-6-6H6zm7 7V3.500L18.500 9H13z"/></svg>
<span class="t" style="left:401.20px;top:725.75px;font-size:11.2px;line-height:15.7px;font-weight:400;color:#1f2738;letter-spacing:0.237px;width:388.0px;overflow:hidden;">RE034-Solar-PV-Specification.pdf</span>
<span class="t" style="left:806.00px;top:725.75px;font-size:11.2px;line-height:15.7px;font-weight:400;color:#1f2738;letter-spacing:0.188px;">Document</span>
<div class="bdg draft" style="top:723.2px"></div>
<span class="t" style="left:958.15px;top:725.75px;font-size:11.2px;line-height:15.7px;font-weight:700;color:#28375a;letter-spacing:0.038px;">Draft</span>
<span class="t" style="left:1133.80px;top:726.25px;font-size:11.2px;line-height:15.7px;font-weight:400;color:#1f2738;">0</span>
<span class="av p" style="top:727.1px">P</span>
<a class="t" style="left:1194.20px;top:726.25px;font-size:11.2px;line-height:15.7px;font-weight:400;color:#2f4ad6;letter-spacing:0.014px;width:141.8px;overflow:hidden;">Pinnacle Piping Co.</a>
<span class="t" style="left:1352.30px;top:726.25px;font-size:11.2px;line-height:15.7px;font-weight:400;color:#1f2738;letter-spacing:0.151px;">Engineer Approval</span>
<span class="t" style="left:1510.00px;top:726.25px;font-size:11.2px;line-height:15.7px;font-weight:400;color:#1f2738;letter-spacing:0.259px;">MI34/3491/2024</span>
<span class="t fade" style="left:1664.00px;top:726.25px;font-size:11.2px;line-height:15.7px;font-weight:400;color:#1f2738;letter-spacing:-0.471px;width:21.5px;overflow:hidden;">For Information</span>
</div>
<div class="r">
<div class="row" style="top:747.8px">
<div class="cb sm" style="left:15.800px;top:8.100px"></div>
</div>
<svg class="ic" style="left:379.80px;top:755.10px;width:14px;height:14px;" viewBox="0 0 24 24"><path fill="#5a6a8c" d="M6 2c-1.100 0-1.990.9-1.990 2L4 20c0 1.100.890 2 1.990 2H18c1.100 0 2-.9 2-2V8l-6-6H6zm7 7V3.500L18.500 9H13z"/></svg>
<span class="t" style="left:401.20px;top:754.55px;font-size:11.2px;line-height:15.7px;font-weight:400;color:#1f2738;letter-spacing:0.013px;width:388.0px;overflow:hidden;">HVAC SPEC Fit-out 1030:3.pdf</span>
<span class="t" style="left:806.00px;top:754.55px;font-size:11.2px;line-height:15.7px;font-weight:400;color:#1f2738;letter-spacing:0.188px;">Document</span>
<div class="bdg publ" style="top:752.0px"></div>
<span class="t" style="left:945.80px;top:754.55px;font-size:11.2px;line-height:15.7px;font-weight:700;color:#17653a;letter-spacing:-0.274px;">Published</span>
<span class="t" style="left:1133.80px;top:755.05px;font-size:11.2px;line-height:15.7px;font-weight:400;color:#1f2738;">0</span>
<span class="av p" style="top:755.9px">P</span>
<a class="t" style="left:1194.20px;top:755.05px;font-size:11.2px;line-height:15.7px;font-weight:400;color:#2f4ad6;letter-spacing:0.138px;width:141.8px;overflow:hidden;">ProPipe Installations</a>
<span class="t" style="left:1510.00px;top:755.05px;font-size:11.2px;line-height:15.7px;font-weight:400;color:#1f2738;letter-spacing:0.364px;">P34908/324</span>
<span class="t fade" style="left:1664.00px;top:755.05px;font-size:11.2px;line-height:15.7px;font-weight:400;color:#1f2738;letter-spacing:-0.481px;width:21.5px;overflow:hidden;">For Construction</span>
</div>
<div class="r">
<div class="row" style="top:776.6px">
<div class="cb sm" style="left:15.800px;top:8.100px"></div>
</div>
<svg class="ic" style="left:379.80px;top:783.90px;width:14px;height:14px;" viewBox="0 0 24 24"><path fill="#5a6a8c" d="M6 2c-1.100 0-1.990.9-1.990 2L4 20c0 1.100.890 2 1.990 2H18c1.100 0 2-.9 2-2V8l-6-6H6zm7 7V3.500L18.500 9H13z"/></svg>
<span class="t" style="left:401.20px;top:783.35px;font-size:11.2px;line-height:15.7px;font-weight:400;color:#1f2738;letter-spacing:0.013px;width:388.0px;overflow:hidden;">HVAC SPEC Fit-out 1030:2.pdf</span>
<span class="t" style="left:806.00px;top:783.35px;font-size:11.2px;line-height:15.7px;font-weight:400;color:#1f2738;letter-spacing:0.188px;">Document</span>
<div class="bdg publ" style="top:780.8px"></div>
<span class="t" style="left:945.80px;top:783.35px;font-size:11.2px;line-height:15.7px;font-weight:700;color:#17653a;letter-spacing:-0.274px;">Published</span>
<span class="t" style="left:1133.80px;top:783.85px;font-size:11.2px;line-height:15.7px;font-weight:400;color:#1f2738;">0</span>
<span class="av p" style="top:784.8px">P</span>
<a class="t" style="left:1194.20px;top:783.85px;font-size:11.2px;line-height:15.7px;font-weight:400;color:#2f4ad6;letter-spacing:0.138px;width:141.8px;overflow:hidden;">ProPipe Installations</a>
<span class="t" style="left:1510.00px;top:783.85px;font-size:11.2px;line-height:15.7px;font-weight:400;color:#1f2738;letter-spacing:0.364px;">P34908/324</span>
<span class="t fade" style="left:1664.00px;top:783.85px;font-size:11.2px;line-height:15.7px;font-weight:400;color:#1f2738;letter-spacing:-0.481px;width:21.5px;overflow:hidden;">For Construction</span>
</div>
<div class="r">
<div class="row" style="top:805.4px">
<div class="cb sm" style="left:15.800px;top:8.100px"></div>
</div>
<svg class="ic" style="left:379.80px;top:812.70px;width:14px;height:14px;" viewBox="0 0 24 24"><path fill="#5a6a8c" d="M6 2c-1.100 0-1.990.9-1.990 2L4 20c0 1.100.890 2 1.990 2H18c1.100 0 2-.9 2-2V8l-6-6H6zm7 7V3.500L18.500 9H13z"/></svg>
<span class="t" style="left:401.20px;top:812.15px;font-size:11.2px;line-height:15.7px;font-weight:400;color:#1f2738;letter-spacing:-0.058px;width:388.0px;overflow:hidden;">HVAC SPEC Fit-out 1030:1.pdf</span>
<span class="t" style="left:806.00px;top:812.15px;font-size:11.2px;line-height:15.7px;font-weight:400;color:#1f2738;letter-spacing:0.188px;">Document</span>
<div class="bdg publ" style="top:809.6px"></div>
<span class="t" style="left:945.80px;top:812.15px;font-size:11.2px;line-height:15.7px;font-weight:700;color:#17653a;letter-spacing:-0.274px;">Published</span>
<span class="t" style="left:1133.80px;top:812.65px;font-size:11.2px;line-height:15.7px;font-weight:400;color:#1f2738;">0</span>
<span class="av p" style="top:813.6px">P</span>
<a class="t" style="left:1194.20px;top:812.65px;font-size:11.2px;line-height:15.7px;font-weight:400;color:#2f4ad6;letter-spacing:0.138px;width:141.8px;overflow:hidden;">ProPipe Installations</a>
<span class="t" style="left:1510.00px;top:812.65px;font-size:11.2px;line-height:15.7px;font-weight:400;color:#1f2738;letter-spacing:0.364px;">P34908/324</span>
<span class="t fade" style="left:1664.00px;top:812.65px;font-size:11.2px;line-height:15.7px;font-weight:400;color:#1f2738;letter-spacing:-0.481px;width:21.5px;overflow:hidden;">For Construction</span>
</div>
<div class="r">
<div class="row" style="top:834.2px">
<div class="cb sm" style="left:15.800px;top:8.100px"></div>
</div>
<svg class="ic" style="left:379.80px;top:841.50px;width:14px;height:14px;" viewBox="0 0 24 24"><path fill="#5a6a8c" d="M6 2c-1.100 0-1.990.9-1.990 2L4 20c0 1.100.890 2 1.990 2H18c1.100 0 2-.9 2-2V8l-6-6H6zm7 7V3.500L18.500 9H13z"/></svg>
<span class="t" style="left:401.20px;top:840.95px;font-size:11.2px;line-height:15.7px;font-weight:400;color:#1f2738;letter-spacing:0.013px;width:388.0px;overflow:hidden;">HVAC SPEC Fit-out 1030:4.pdf</span>
<span class="t" style="left:806.00px;top:840.95px;font-size:11.2px;line-height:15.7px;font-weight:400;color:#1f2738;letter-spacing:0.188px;">Document</span>
<div class="bdg draft" style="top:838.4px"></div>
<span class="t" style="left:958.15px;top:840.95px;font-size:11.2px;line-height:15.7px;font-weight:700;color:#28375a;letter-spacing:0.038px;">Draft</span>
<span class="t" style="left:1133.80px;top:841.45px;font-size:11.2px;line-height:15.7px;font-weight:400;color:#1f2738;">0</span>
<span class="av p" style="top:842.4px">P</span>
<a class="t" style="left:1194.20px;top:841.45px;font-size:11.2px;line-height:15.7px;font-weight:400;color:#2f4ad6;letter-spacing:0.138px;width:141.8px;overflow:hidden;">ProPipe Installations</a>
<span class="t" style="left:1510.00px;top:841.45px;font-size:11.2px;line-height:15.7px;font-weight:400;color:#1f2738;letter-spacing:0.364px;">P34908/324</span>
<span class="t fade" style="left:1664.00px;top:841.45px;font-size:11.2px;line-height:15.7px;font-weight:400;color:#1f2738;letter-spacing:-0.481px;width:21.5px;overflow:hidden;">For Construction</span>
</div>
<div class="r">
<div class="row" style="top:863.0px">
<div class="cb sm" style="left:15.800px;top:8.100px"></div>
</div>
<svg class="ic" style="left:379.80px;top:870.30px;width:14px;height:14px;" viewBox="0 0 24 24"><path fill="#5a6a8c" d="M6 2c-1.100 0-1.990.9-1.990 2L4 20c0 1.100.890 2 1.990 2H18c1.100 0 2-.9 2-2V8l-6-6H6zm7 7V3.500L18.500 9H13z"/></svg>
<span class="t" style="left:401.20px;top:869.75px;font-size:11.2px;line-height:15.7px;font-weight:400;color:#1f2738;letter-spacing:0.013px;width:388.0px;overflow:hidden;">HVAC SPEC Fit-out 1030:5.pdf</span>
<span class="t" style="left:806.00px;top:869.75px;font-size:11.2px;line-height:15.7px;font-weight:400;color:#1f2738;letter-spacing:0.188px;">Document</span>
<div class="bdg draft" style="top:867.2px"></div>
<span class="t" style="left:958.15px;top:869.75px;font-size:11.2px;line-height:15.7px;font-weight:700;color:#28375a;letter-spacing:0.038px;">Draft</span>
<span class="t" style="left:1133.80px;top:870.25px;font-size:11.2px;line-height:15.7px;font-weight:400;color:#1f2738;">0</span>
<span class="av p" style="top:871.1px">P</span>
<a class="t" style="left:1194.20px;top:870.25px;font-size:11.2px;line-height:15.7px;font-weight:400;color:#2f4ad6;letter-spacing:0.138px;width:141.8px;overflow:hidden;">ProPipe Installations</a>
<span class="t" style="left:1510.00px;top:870.25px;font-size:11.2px;line-height:15.7px;font-weight:400;color:#1f2738;letter-spacing:0.364px;">P34908/324</span>
<span class="t fade" style="left:1664.00px;top:870.25px;font-size:11.2px;line-height:15.7px;font-weight:400;color:#1f2738;letter-spacing:-0.481px;width:21.5px;overflow:hidden;">For Construction</span>
</div>
<div class="r">
<div class="row" style="top:891.8px">
<div class="cb sm" style="left:15.800px;top:8.100px"></div>
</div>
<svg class="ic" style="left:379.80px;top:899.10px;width:14px;height:14px;" viewBox="0 0 24 24"><path fill="#5a6a8c" d="M6 2c-1.100 0-1.990.9-1.990 2L4 20c0 1.100.890 2 1.990 2H18c1.100 0 2-.9 2-2V8l-6-6H6zm7 7V3.500L18.500 9H13z"/></svg>
<span class="t" style="left:401.20px;top:898.55px;font-size:11.2px;line-height:15.7px;font-weight:400;color:#1f2738;letter-spacing:-0.040px;width:388.0px;overflow:hidden;">HVAC SPEC Fit-out 1030:7.pdf</span>
<span class="t" style="left:806.00px;top:898.55px;font-size:11.2px;line-height:15.7px;font-weight:400;color:#1f2738;letter-spacing:0.188px;">Document</span>
<div class="bdg draft" style="top:896.0px"></div>
<span class="t" style="left:958.15px;top:898.55px;font-size:11.2px;line-height:15.7px;font-weight:700;color:#28375a;letter-spacing:0.038px;">Draft</span>
<span class="t" style="left:1133.80px;top:899.05px;font-size:11.2px;line-height:15.7px;font-weight:400;color:#1f2738;">0</span>
<span class="av p" style="top:899.9px">P</span>
<a class="t" style="left:1194.20px;top:899.05px;font-size:11.2px;line-height:15.7px;font-weight:400;color:#2f4ad6;letter-spacing:0.138px;width:141.8px;overflow:hidden;">ProPipe Installations</a>
<span class="t" style="left:1510.00px;top:899.05px;font-size:11.2px;line-height:15.7px;font-weight:400;color:#1f2738;letter-spacing:0.364px;">P34908/324</span>
<span class="t fade" style="left:1664.00px;top:899.05px;font-size:11.2px;line-height:15.7px;font-weight:400;color:#1f2738;letter-spacing:-0.481px;width:21.5px;overflow:hidden;">For Construction</span>
</div>
<div class="r">
<div class="row" style="top:920.6px">
<div class="cb sm" style="left:15.800px;top:8.100px"></div>
</div>
<svg class="ic" style="left:379.80px;top:927.90px;width:14px;height:14px;" viewBox="0 0 24 24"><path fill="#5a6a8c" d="M6 2c-1.100 0-1.990.9-1.990 2L4 20c0 1.100.890 2 1.990 2H18c1.100 0 2-.9 2-2V8l-6-6H6zm7 7V3.500L18.500 9H13z"/></svg>
<span class="t" style="left:401.20px;top:927.35px;font-size:11.2px;line-height:15.7px;font-weight:400;color:#1f2738;letter-spacing:0.013px;width:388.0px;overflow:hidden;">HVAC SPEC Fit-out 1030:8.pdf</span>
<span class="t" style="left:806.00px;top:927.35px;font-size:11.2px;line-height:15.7px;font-weight:400;color:#1f2738;letter-spacing:0.188px;">Document</span>
<div class="bdg draft" style="top:924.8px"></div>
<span class="t" style="left:958.15px;top:927.35px;font-size:11.2px;line-height:15.7px;font-weight:700;color:#28375a;letter-spacing:0.038px;">Draft</span>
<span class="t" style="left:1133.80px;top:927.85px;font-size:11.2px;line-height:15.7px;font-weight:400;color:#1f2738;">0</span>
<span class="av p" style="top:928.8px">P</span>
<a class="t" style="left:1194.20px;top:927.85px;font-size:11.2px;line-height:15.7px;font-weight:400;color:#2f4ad6;letter-spacing:0.138px;width:141.8px;overflow:hidden;">ProPipe Installations</a>
<span class="t" style="left:1510.00px;top:927.85px;font-size:11.2px;line-height:15.7px;font-weight:400;color:#1f2738;letter-spacing:0.364px;">P34908/324</span>
<span class="t fade" style="left:1664.00px;top:927.85px;font-size:11.2px;line-height:15.7px;font-weight:400;color:#1f2738;letter-spacing:-0.481px;width:21.5px;overflow:hidden;">For Construction</span>
</div>
<div class="pinline"></div>
<div class="vscroll"></div>
<div class="hscroll"><div class="hthumb"></div></div>
<div class="hscroll-l"></div><div class="pinline2"></div>
</div>
<div class="sidepanel">
<svg class="ic" style="left:1707.20px;top:268.70px;width:15.2px;height:15.2px;" viewBox="0 0 24 24"><path fill="#111827" d="M10 18h5V5h-5v13zm-6 0h5V5H4v13zM16 5v13h5V5h-5z"/></svg>
<span class="vt" style="left:1708px;top:286.500px;height:44px">Columns</span>
<svg class="ic" style="left:1707.45px;top:371.65px;width:15.5px;height:15.5px;" viewBox="0 0 24 24"><path fill="#111827" d="M4.250 5.610C6.270 8.200 10 13 10 13v6c0 .550.450 1 1 1h2c.550 0 1-.450 1-1v-6s3.720-4.800 5.740-7.390c.510-.660.040-1.610-.790-1.610H5.040c-.830 0-1.300.950-.790 1.610z"/></svg>
<span class="vt" style="left:1708px;top:390.500px;height:31px">Filters</span>
</div>
</main>
</body></html>
